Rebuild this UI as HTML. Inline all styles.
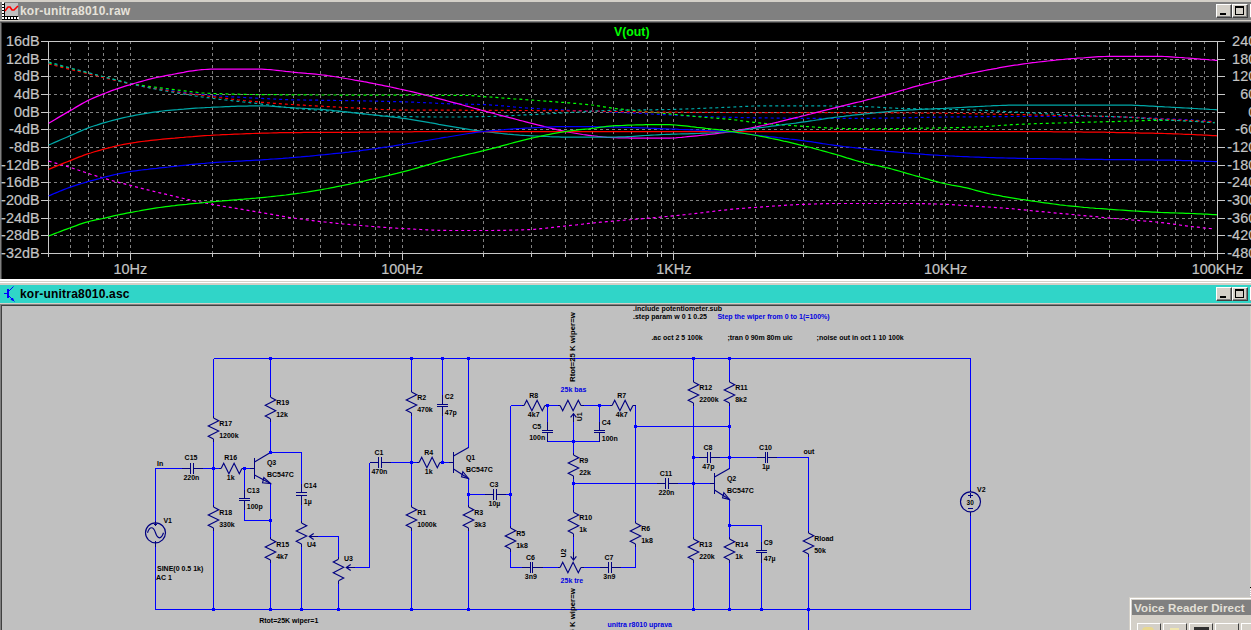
<!DOCTYPE html>
<html lang="en"><head><meta charset="utf-8"><title>kor-unitra8010</title>
<style>
html,body{margin:0;padding:0;}
body{width:1251px;height:630px;overflow:hidden;background:#d4d0c8;position:relative;font-family:"Liberation Sans", sans-serif;}
.abs{position:absolute;}
.tb{position:absolute;left:0;width:1251px;height:18px;}
.ttl{position:absolute;left:20px;top:0;height:18px;line-height:18px;font-size:12px;font-weight:bold;white-space:nowrap;letter-spacing:0.2px;}
.btn{position:absolute;width:16px;height:14px;box-sizing:border-box;background:#d4d0c8;border-top:1px solid #fff;border-left:1px solid #fff;border-right:1px solid #404040;border-bottom:1px solid #404040;box-shadow:inset -1px -1px 0 #808080;}
.btn i{position:absolute;display:block;background:#000;}
svg{position:absolute;left:0;top:0;}
svg text{font-family:"Liberation Sans", sans-serif;}
</style></head><body>
<div class="tb" style="top:2px;background:#808080;">
<div class="ttl" style="color:#e6e2da;">kor-unitra8010.raw</div>
<div class="btn" style="left:1216px;top:2px;"><i style="left:3px;top:8px;width:6px;height:2px;"></i></div>
<div class="btn" style="left:1232px;top:2px;"><i style="left:2px;top:1px;width:9px;height:9px;"></i><i style="left:3px;top:3px;width:7px;height:6px;background:#d4d0c8;"></i></div>
<div class="btn" style="left:1250px;top:2px;"></div>
</div>
<div class="abs" style="left:0;top:21px;width:1251px;height:1px;background:#808080;"></div>
<div class="abs" style="left:0;top:22px;width:1251px;height:257px;background:#000;border-top:1px solid #404040;border-left:1px solid #808080;box-sizing:border-box;"></div>
<div class="abs" style="left:1px;top:23px;width:1px;height:256px;background:#404040;"></div>
<div class="abs" style="left:0;top:279px;width:1251px;height:2px;background:#fff;"></div>
<div class="abs" style="left:0;top:282px;width:1251px;height:1px;background:#fff;"></div>
<div class="tb" style="top:285px;background:#30d5c8;">
<div class="ttl" style="color:#000;">kor-unitra8010.asc</div>
<div class="btn" style="left:1216px;top:2px;"><i style="left:3px;top:8px;width:6px;height:2px;"></i></div>
<div class="btn" style="left:1232px;top:2px;"><i style="left:2px;top:1px;width:9px;height:9px;"></i><i style="left:3px;top:3px;width:7px;height:6px;background:#d4d0c8;"></i></div>
<div class="btn" style="left:1250px;top:2px;"></div>
</div>
<div class="abs" style="left:0;top:304px;width:1251px;height:326px;background:#c0c0c0;border-top:1px solid #808080;border-left:1px solid #808080;box-sizing:border-box;"></div>
<div class="abs" style="left:1px;top:305px;width:1250px;height:1px;background:#404040;"></div>
<div class="abs" style="left:1px;top:305px;width:1px;height:325px;background:#404040;"></div>
<div class="abs" style="left:1250px;top:306px;width:1px;height:324px;background:#d4d0c8;"></div>
<div class="abs" style="left:1250px;top:587px;width:1px;height:1px;background:#000;"></div>
<div class="abs" style="left:1250px;top:589px;width:1px;height:8px;background:repeating-linear-gradient(#fff 0 1px,#c0c0c0 1px 2px);"></div>
<div class="abs" style="left:1129px;top:597px;width:130px;height:40px;background:#d4d0c8;border-top:1px solid #d4d0c8;border-left:1px solid #d4d0c8;box-shadow:inset 1px 1px 0 #fff;box-sizing:border-box;">
<div class="abs" style="left:2px;top:2px;width:130px;height:15px;background:#808080;"></div>
<div class="abs" style="left:4px;top:2px;height:16px;line-height:16px;font-size:11.5px;letter-spacing:0.15px;font-weight:bold;color:#e4e0d8;white-space:nowrap;" id="vrd">Voice Reader Direct</div>
<div class="abs" style="left:7px;top:25px;width:24px;height:22px;box-sizing:border-box;border-top:1px solid #fff;border-left:1px solid #fff;border-right:1px solid #404040;background:#d4d0c8;"></div>
<div class="abs" style="left:33px;top:25px;width:24px;height:22px;box-sizing:border-box;border-top:1px solid #fff;border-left:1px solid #fff;border-right:1px solid #404040;background:#d4d0c8;"></div>
<div class="abs" style="left:59px;top:25px;width:24px;height:22px;box-sizing:border-box;border-top:1px solid #fff;border-left:1px solid #fff;border-right:1px solid #404040;background:#d4d0c8;"></div>
<div class="abs" style="left:85px;top:25px;width:24px;height:22px;box-sizing:border-box;border-top:1px solid #fff;border-left:1px solid #fff;border-right:1px solid #404040;background:#d4d0c8;"></div>
<div class="abs" style="left:111px;top:25px;width:24px;height:22px;box-sizing:border-box;border-top:1px solid #fff;border-left:1px solid #fff;border-right:1px solid #404040;background:#d4d0c8;"></div>
<div class="abs" style="left:12px;top:29px;width:12px;height:4px;background:#e8d890;border-radius:4px 4px 0 0;"></div>
<div class="abs" style="left:40px;top:30px;width:9px;height:3px;background:#efe6b0;"></div>
<div class="abs" style="left:64px;top:29px;width:15px;height:4px;background:#303030;"></div>
</div>
<svg width="1251" height="630" viewBox="0 0 1251 630">
<g shape-rendering="crispEdges">
<rect x="2" y="3" width="3" height="17" fill="#000"/><rect x="2" y="16" width="16" height="4" fill="#000"/>
<rect x="5" y="3" width="13" height="13" fill="#c0c0c0"/>
<rect x="4" y="3" width="1" height="17" fill="#000"/><rect x="2" y="16" width="16" height="1" fill="#000"/>
<rect x="2" y="2" width="2" height="2" fill="#fff"/>
<rect x="2" y="5" width="2" height="2" fill="#fff"/>
<rect x="2" y="8" width="2" height="2" fill="#fff"/>
<rect x="2" y="11" width="2" height="2" fill="#fff"/>
<rect x="2" y="14" width="2" height="2" fill="#fff"/>
<rect x="2" y="17" width="2" height="2" fill="#fff"/>
<rect x="5" y="17" width="2" height="2" fill="#fff"/>
<rect x="8" y="17" width="2" height="2" fill="#fff"/>
<rect x="11" y="17" width="2" height="2" fill="#fff"/>
<rect x="14" y="17" width="2" height="2" fill="#fff"/>
<rect x="17" y="17" width="2" height="2" fill="#fff"/>
</g>
<path d="M5 11 L8 7 L10 7 L12 10 L14 10 L18 6" fill="none" stroke="#ff0000" stroke-width="1.6"/>
<g stroke="#0000ff" fill="none"><path d="M4 293.5 H8" stroke-width="1"/><path d="M8 289 V298" stroke-width="2"/><path d="M9 291 L13.5 286.5 M9 296 L14.5 301.5" stroke-width="1"/><path d="M11 299.5 L13.5 300.5 L12.5 298 Z" fill="#0000ff" stroke-width="1"/></g>
<g shape-rendering="crispEdges" stroke="#808080" stroke-width="1" stroke-dasharray="3 3" fill="none">
<path d="M48.0 59.5 H1216.5"/>
<path d="M48.0 76.5 H1216.5"/>
<path d="M48.0 94.5 H1216.5"/>
<path d="M48.0 112.5 H1216.5"/>
<path d="M48.0 129.5 H1216.5"/>
<path d="M48.0 147.5 H1216.5"/>
<path d="M48.0 165.5 H1216.5"/>
<path d="M48.0 182.5 H1216.5"/>
<path d="M48.0 200.5 H1216.5"/>
<path d="M48.0 218.5 H1216.5"/>
<path d="M48.0 235.5 H1216.5"/>
<path d="M70.5 41.0 V252.5"/>
<path d="M88.5 41.0 V252.5"/>
<path d="M103.5 41.0 V252.5"/>
<path d="M117.5 41.0 V252.5"/>
<path d="M130.5 41.0 V252.5"/>
<path d="M212.5 41.0 V252.5"/>
<path d="M259.5 41.0 V252.5"/>
<path d="M293.5 41.0 V252.5"/>
<path d="M320.5 41.0 V252.5"/>
<path d="M341.5 41.0 V252.5"/>
<path d="M359.5 41.0 V252.5"/>
<path d="M375.5 41.0 V252.5"/>
<path d="M389.5 41.0 V252.5"/>
<path d="M402.5 41.0 V252.5"/>
<path d="M483.5 41.0 V252.5"/>
<path d="M531.5 41.0 V252.5"/>
<path d="M565.5 41.0 V252.5"/>
<path d="M592.5 41.0 V252.5"/>
<path d="M613.5 41.0 V252.5"/>
<path d="M631.5 41.0 V252.5"/>
<path d="M647.5 41.0 V252.5"/>
<path d="M661.5 41.0 V252.5"/>
<path d="M673.5 41.0 V252.5"/>
<path d="M755.5 41.0 V252.5"/>
<path d="M803.5 41.0 V252.5"/>
<path d="M837.5 41.0 V252.5"/>
<path d="M863.5 41.0 V252.5"/>
<path d="M885.5 41.0 V252.5"/>
<path d="M903.5 41.0 V252.5"/>
<path d="M919.5 41.0 V252.5"/>
<path d="M933.5 41.0 V252.5"/>
<path d="M945.5 41.0 V252.5"/>
<path d="M1027.5 41.0 V252.5"/>
<path d="M1075.5 41.0 V252.5"/>
<path d="M1109.5 41.0 V252.5"/>
<path d="M1135.5 41.0 V252.5"/>
<path d="M1157.5 41.0 V252.5"/>
<path d="M1175.5 41.0 V252.5"/>
<path d="M1191.5 41.0 V252.5"/>
<path d="M1204.5 41.0 V252.5"/>
</g>
<g shape-rendering="crispEdges" stroke="#c8c8c8" stroke-width="1" fill="none">
<path d="M48.5 41.5 H1217.5 M48.5 253.5 H1217.5 M48.5 41.5 V253.5 M1217.5 41.5 V253.5"/>
<path d="M41 41.5 H48.5 M1217.5 41.5 H1225"/>
<path d="M41 59.5 H48.5 M1217.5 59.5 H1225"/>
<path d="M41 76.5 H48.5 M1217.5 76.5 H1225"/>
<path d="M41 94.5 H48.5 M1217.5 94.5 H1225"/>
<path d="M41 112.5 H48.5 M1217.5 112.5 H1225"/>
<path d="M41 129.5 H48.5 M1217.5 129.5 H1225"/>
<path d="M41 147.5 H48.5 M1217.5 147.5 H1225"/>
<path d="M41 165.5 H48.5 M1217.5 165.5 H1225"/>
<path d="M41 182.5 H48.5 M1217.5 182.5 H1225"/>
<path d="M41 200.5 H48.5 M1217.5 200.5 H1225"/>
<path d="M41 218.5 H48.5 M1217.5 218.5 H1225"/>
<path d="M41 235.5 H48.5 M1217.5 235.5 H1225"/>
<path d="M41 253.5 H48.5 M1217.5 253.5 H1225"/>
<path d="M70.5 253.5 V257.0"/>
<path d="M88.5 253.5 V257.0"/>
<path d="M103.5 253.5 V257.0"/>
<path d="M117.5 253.5 V257.0"/>
<path d="M130.5 253.5 V260.0"/>
<path d="M212.5 253.5 V257.0"/>
<path d="M259.5 253.5 V257.0"/>
<path d="M293.5 253.5 V257.0"/>
<path d="M320.5 253.5 V257.0"/>
<path d="M341.5 253.5 V257.0"/>
<path d="M359.5 253.5 V257.0"/>
<path d="M375.5 253.5 V257.0"/>
<path d="M389.5 253.5 V257.0"/>
<path d="M402.5 253.5 V260.0"/>
<path d="M483.5 253.5 V257.0"/>
<path d="M531.5 253.5 V257.0"/>
<path d="M565.5 253.5 V257.0"/>
<path d="M592.5 253.5 V257.0"/>
<path d="M613.5 253.5 V257.0"/>
<path d="M631.5 253.5 V257.0"/>
<path d="M647.5 253.5 V257.0"/>
<path d="M661.5 253.5 V257.0"/>
<path d="M673.5 253.5 V260.0"/>
<path d="M755.5 253.5 V257.0"/>
<path d="M803.5 253.5 V257.0"/>
<path d="M837.5 253.5 V257.0"/>
<path d="M863.5 253.5 V257.0"/>
<path d="M885.5 253.5 V257.0"/>
<path d="M903.5 253.5 V257.0"/>
<path d="M919.5 253.5 V257.0"/>
<path d="M933.5 253.5 V257.0"/>
<path d="M945.5 253.5 V260.0"/>
<path d="M1027.5 253.5 V257.0"/>
<path d="M1075.5 253.5 V257.0"/>
<path d="M1109.5 253.5 V257.0"/>
<path d="M1135.5 253.5 V257.0"/>
<path d="M1157.5 253.5 V257.0"/>
<path d="M1175.5 253.5 V257.0"/>
<path d="M1191.5 253.5 V257.0"/>
<path d="M1204.5 253.5 V257.0"/>
<path d="M48.5 253.5 V257 M1217.5 253.5 V260"/>
</g>
<path d="M48.7 63.2 L51.7 64.0 L54.7 64.8 L57.7 65.5 L60.7 66.3 L63.7 67.1 L66.7 67.9 L69.7 68.6 L72.7 69.4 L75.7 70.1 L78.7 70.9 L81.7 71.6 L84.7 72.4 L87.7 73.1 L90.7 73.9 L93.7 74.6 L96.7 75.4 L99.7 76.1 L102.7 76.9 L105.7 77.6 L108.7 78.4 L111.7 79.1 L114.7 79.9 L117.7 80.6 L120.7 81.4 L123.7 82.1 L126.7 82.8 L129.7 83.5 L132.7 84.1 L135.7 84.7 L138.7 85.3 L141.7 85.8 L144.7 86.4 L147.7 86.9 L150.7 87.4 L153.7 87.9 L156.7 88.4 L159.7 88.9 L162.7 89.3 L165.7 89.7 L168.7 90.2 L171.7 90.6 L174.7 91.0 L177.7 91.5 L180.7 91.9 L183.7 92.3 L186.7 92.7 L189.7 93.0 L192.7 93.4 L195.7 93.8 L198.7 94.1 L201.7 94.4 L204.7 94.7 L207.7 95.0 L210.7 95.3 L213.7 95.5 L216.7 95.8 L219.7 96.0 L222.7 96.2 L225.7 96.4 L228.7 96.6 L231.7 96.8 L234.7 97.0 L237.7 97.1 L240.7 97.3 L243.7 97.5 L246.7 97.6 L249.7 97.8 L252.7 98.0 L255.7 98.1 L258.7 98.3 L261.7 98.4 L264.7 98.6 L267.7 98.7 L270.7 98.9 L273.7 99.0 L276.7 99.2 L279.7 99.3 L282.7 99.4 L285.7 99.6 L288.7 99.7 L291.7 99.8 L294.7 99.8 L297.7 99.9 L300.7 100.0 L303.7 100.0 L306.7 100.1 L309.7 100.1 L312.7 100.2 L315.7 100.2 L318.7 100.2 L321.7 100.3 L324.7 100.3 L327.7 100.4 L330.7 100.4 L333.7 100.4 L336.7 100.5 L339.7 100.5 L342.7 100.5 L345.7 100.6 L348.7 100.6 L351.7 100.7 L354.7 100.7 L357.7 100.8 L360.7 100.9 L363.7 100.9 L366.7 101.0 L369.7 101.0 L372.7 101.1 L375.7 101.2 L378.7 101.2 L381.7 101.3 L384.7 101.3 L387.7 101.4 L390.7 101.5 L393.7 101.6 L396.7 101.6 L399.7 101.7 L402.7 101.8 L405.7 101.9 L408.7 102.0 L411.7 102.1 L414.7 102.2 L417.7 102.4 L420.7 102.5 L423.7 102.6 L426.7 102.8 L429.7 102.9 L432.7 103.0 L435.7 103.2 L438.7 103.3 L441.7 103.4 L444.7 103.6 L447.7 103.7 L450.7 103.8 L453.7 103.9 L456.7 103.9 L459.7 104.0 L462.7 104.1 L465.7 104.1 L468.7 104.2 L471.7 104.3 L474.7 104.3 L477.7 104.4 L480.7 104.5 L483.7 104.6 L486.7 104.7 L489.7 104.9 L492.7 105.1 L495.7 105.3 L498.7 105.5 L501.7 105.8 L504.7 106.0 L507.7 106.3 L510.7 106.6 L513.7 106.9 L516.7 107.1 L519.7 107.4 L522.7 107.6 L525.7 107.9 L528.7 108.1 L531.7 108.3 L534.7 108.5 L537.7 108.7 L540.7 108.8 L543.7 109.0 L546.7 109.2 L549.7 109.3 L552.7 109.5 L555.7 109.6 L558.7 109.8 L561.7 109.9 L564.7 110.1 L567.7 110.2 L570.7 110.3 L573.7 110.5 L576.7 110.6 L579.7 110.7 L582.7 110.8 L585.7 111.0 L588.7 111.1 L591.7 111.2 L594.7 111.3 L597.7 111.4 L600.7 111.5 L603.7 111.7 L606.7 111.8 L609.7 111.9 L612.7 112.1 L615.7 112.2 L618.7 112.3 L621.7 112.5 L624.7 112.6 L627.7 112.8 L630.7 112.9 L633.7 113.1 L636.7 113.2 L639.7 113.4 L642.7 113.5 L645.7 113.7 L648.7 113.8 L651.7 114.0 L654.7 114.1 L657.7 114.3 L660.7 114.4 L663.7 114.6 L666.7 114.7 L669.7 114.9 L672.7 115.1 L675.7 115.2 L678.7 115.4 L681.7 115.6 L684.7 115.7 L687.7 115.9 L690.7 116.1 L693.7 116.2 L696.7 116.3 L699.7 116.4 L702.7 116.5 L705.7 116.6 L708.7 116.7 L711.7 116.8 L714.7 116.9 L717.7 117.0 L720.7 117.1 L723.7 117.2 L726.7 117.2 L729.7 117.3 L732.7 117.4 L735.7 117.4 L738.7 117.5 L741.7 117.6 L744.7 117.6 L747.7 117.7 L750.7 117.7 L753.7 117.8 L756.7 117.8 L759.7 117.9 L762.7 117.9 L765.7 117.9 L768.7 118.0 L771.7 118.0 L774.7 118.1 L777.7 118.1 L780.7 118.2 L783.7 118.2 L786.7 118.2 L789.7 118.2 L792.7 118.3 L795.7 118.3 L798.7 118.3 L801.7 118.3 L804.7 118.3 L807.7 118.3 L810.7 118.3 L813.7 118.3 L816.7 118.3 L819.7 118.3 L822.7 118.3 L825.7 118.3 L828.7 118.3 L831.7 118.3 L834.7 118.3 L837.7 118.3 L840.7 118.3 L843.7 118.3 L846.7 118.3 L849.7 118.3 L852.7 118.3 L855.7 118.3 L858.7 118.3 L861.7 118.3 L864.7 118.3 L867.7 118.3 L870.7 118.3 L873.7 118.3 L876.7 118.2 L879.7 118.2 L882.7 118.2 L885.7 118.1 L888.7 118.1 L891.7 118.0 L894.7 118.0 L897.7 117.9 L900.7 117.8 L903.7 117.8 L906.7 117.7 L909.7 117.6 L912.7 117.6 L915.7 117.5 L918.7 117.4 L921.7 117.4 L924.7 117.3 L927.7 117.3 L930.7 117.2 L933.7 117.2 L936.7 117.1 L939.7 117.1 L942.7 117.0 L945.7 117.0 L948.7 117.0 L951.7 116.9 L954.7 116.9 L957.7 116.9 L960.7 116.9 L963.7 116.8 L966.7 116.8 L969.7 116.8 L972.7 116.8 L975.7 116.7 L978.7 116.7 L981.7 116.7 L984.7 116.7 L987.7 116.7 L990.7 116.6 L993.7 116.6 L996.7 116.6 L999.7 116.6 L1002.7 116.6 L1005.7 116.6 L1008.7 116.5 L1011.7 116.5 L1014.7 116.5 L1017.7 116.5 L1020.7 116.5 L1023.7 116.5 L1026.7 116.5 L1029.7 116.4 L1032.7 116.4 L1035.7 116.4 L1038.7 116.4 L1041.7 116.4 L1044.7 116.4 L1047.7 116.4 L1050.7 116.3 L1053.7 116.3 L1056.7 116.3 L1059.7 116.3 L1062.7 116.3 L1065.7 116.3 L1068.7 116.3 L1071.7 116.3 L1074.7 116.3 L1077.7 116.3 L1080.7 116.3 L1083.7 116.3 L1086.7 116.4 L1089.7 116.4 L1092.7 116.4 L1095.7 116.5 L1098.7 116.5 L1101.7 116.6 L1104.7 116.6 L1107.7 116.7 L1110.7 116.7 L1113.7 116.8 L1116.7 116.9 L1119.7 116.9 L1122.7 117.0 L1125.7 117.1 L1128.7 117.1 L1131.7 117.2 L1134.7 117.3 L1137.7 117.4 L1140.7 117.6 L1143.7 117.7 L1146.7 117.8 L1149.7 117.9 L1152.7 118.1 L1155.7 118.2 L1158.7 118.3 L1161.7 118.5 L1164.7 118.6 L1167.7 118.8 L1170.7 118.9 L1173.7 119.1 L1176.7 119.2 L1179.7 119.4 L1182.7 119.5 L1185.7 119.7 L1188.7 119.9 L1191.7 120.1 L1194.7 120.2 L1197.7 120.4 L1200.7 120.6 L1203.7 120.8 L1206.7 121.0 L1209.7 121.2 L1212.7 121.4 L1214.6 121.5" fill="none" stroke="#0000ff" stroke-width="1.2" stroke-dasharray="3 3"/>
<path d="M48.7 63.0 L51.7 63.8 L54.7 64.6 L57.7 65.3 L60.7 66.1 L63.7 66.9 L66.7 67.7 L69.7 68.4 L72.7 69.2 L75.7 69.9 L78.7 70.7 L81.7 71.4 L84.7 72.2 L87.7 72.9 L90.7 73.7 L93.7 74.4 L96.7 75.2 L99.7 75.9 L102.7 76.7 L105.7 77.4 L108.7 78.2 L111.7 78.9 L114.7 79.7 L117.7 80.5 L120.7 81.2 L123.7 82.0 L126.7 82.7 L129.7 83.3 L132.7 83.8 L135.7 84.4 L138.7 84.8 L141.7 85.3 L144.7 85.8 L147.7 86.2 L150.7 86.6 L153.7 87.0 L156.7 87.4 L159.7 87.8 L162.7 88.2 L165.7 88.5 L168.7 88.9 L171.7 89.3 L174.7 89.7 L177.7 90.1 L180.7 90.4 L183.7 90.8 L186.7 91.2 L189.7 91.5 L192.7 91.9 L195.7 92.2 L198.7 92.5 L201.7 92.8 L204.7 93.0 L207.7 93.2 L210.7 93.3 L213.7 93.5 L216.7 93.6 L219.7 93.7 L222.7 93.8 L225.7 93.9 L228.7 94.0 L231.7 94.1 L234.7 94.2 L237.7 94.2 L240.7 94.3 L243.7 94.4 L246.7 94.4 L249.7 94.5 L252.7 94.5 L255.7 94.6 L258.7 94.6 L261.7 94.6 L264.7 94.6 L267.7 94.7 L270.7 94.7 L273.7 94.7 L276.7 94.7 L279.7 94.8 L282.7 94.8 L285.7 94.8 L288.7 94.8 L291.7 94.8 L294.7 94.9 L297.7 94.9 L300.7 94.9 L303.7 94.9 L306.7 94.9 L309.7 94.9 L312.7 95.0 L315.7 95.0 L318.7 95.0 L321.7 95.0 L324.7 95.0 L327.7 95.0 L330.7 95.0 L333.7 95.0 L336.7 95.0 L339.7 95.1 L342.7 95.1 L345.7 95.1 L348.7 95.1 L351.7 95.1 L354.7 95.1 L357.7 95.1 L360.7 95.1 L363.7 95.1 L366.7 95.1 L369.7 95.2 L372.7 95.2 L375.7 95.2 L378.7 95.2 L381.7 95.2 L384.7 95.2 L387.7 95.2 L390.7 95.2 L393.7 95.2 L396.7 95.2 L399.7 95.2 L402.7 95.2 L405.7 95.2 L408.7 95.2 L411.7 95.2 L414.7 95.2 L417.7 95.2 L420.7 95.2 L423.7 95.2 L426.7 95.2 L429.7 95.3 L432.7 95.3 L435.7 95.3 L438.7 95.3 L441.7 95.3 L444.7 95.3 L447.7 95.3 L450.7 95.3 L453.7 95.3 L456.7 95.4 L459.7 95.4 L462.7 95.4 L465.7 95.4 L468.7 95.5 L471.7 95.7 L474.7 95.9 L477.7 96.1 L480.7 96.4 L483.7 96.6 L486.7 96.8 L489.7 97.0 L492.7 97.2 L495.7 97.4 L498.7 97.6 L501.7 97.9 L504.7 98.1 L507.7 98.3 L510.7 98.5 L513.7 98.8 L516.7 99.0 L519.7 99.2 L522.7 99.4 L525.7 99.7 L528.7 99.9 L531.7 100.1 L534.7 100.3 L537.7 100.5 L540.7 100.8 L543.7 101.0 L546.7 101.2 L549.7 101.4 L552.7 101.6 L555.7 101.8 L558.7 102.1 L561.7 102.3 L564.7 102.5 L567.7 102.8 L570.7 103.0 L573.7 103.3 L576.7 103.5 L579.7 103.8 L582.7 104.1 L585.7 104.4 L588.7 104.7 L591.7 105.0 L594.7 105.3 L597.7 105.8 L600.7 106.3 L603.7 106.8 L606.7 107.3 L609.7 107.7 L612.7 108.2 L615.7 108.5 L618.7 108.9 L621.7 109.2 L624.7 109.5 L627.7 109.9 L630.7 110.2 L633.7 110.5 L636.7 110.7 L639.7 111.0 L642.7 111.3 L645.7 111.6 L648.7 111.9 L651.7 112.1 L654.7 112.4 L657.7 112.7 L660.7 113.0 L663.7 113.3 L666.7 113.6 L669.7 113.9 L672.7 114.2 L675.7 114.5 L678.7 114.8 L681.7 115.1 L684.7 115.4 L687.7 115.7 L690.7 116.0 L693.7 116.3 L696.7 116.6 L699.7 116.8 L702.7 117.1 L705.7 117.4 L708.7 117.6 L711.7 117.9 L714.7 118.1 L717.7 118.3 L720.7 118.6 L723.7 118.8 L726.7 119.1 L729.7 119.3 L732.7 119.6 L735.7 120.0 L738.7 120.4 L741.7 120.8 L744.7 121.2 L747.7 121.6 L750.7 122.0 L753.7 122.3 L756.7 122.6 L759.7 122.9 L762.7 123.2 L765.7 123.5 L768.7 123.7 L771.7 124.0 L774.7 124.2 L777.7 124.5 L780.7 124.7 L783.7 124.9 L786.7 125.1 L789.7 125.4 L792.7 125.6 L795.7 125.8 L798.7 126.0 L801.7 126.2 L804.7 126.4 L807.7 126.6 L810.7 126.8 L813.7 127.0 L816.7 127.2 L819.7 127.4 L822.7 127.6 L825.7 127.8 L828.7 127.9 L831.7 128.1 L834.7 128.2 L837.7 128.3 L840.7 128.4 L843.7 128.5 L846.7 128.6 L849.7 128.6 L852.7 128.7 L855.7 128.7 L858.7 128.8 L861.7 128.8 L864.7 128.8 L867.7 128.8 L870.7 128.8 L873.7 128.8 L876.7 128.8 L879.7 128.7 L882.7 128.7 L885.7 128.7 L888.7 128.7 L891.7 128.6 L894.7 128.6 L897.7 128.6 L900.7 128.5 L903.7 128.5 L906.7 128.5 L909.7 128.4 L912.7 128.4 L915.7 128.3 L918.7 128.3 L921.7 128.2 L924.7 128.2 L927.7 128.1 L930.7 128.1 L933.7 128.0 L936.7 128.0 L939.7 127.9 L942.7 127.9 L945.7 127.8 L948.7 127.7 L951.7 127.7 L954.7 127.6 L957.7 127.6 L960.7 127.5 L963.7 127.4 L966.7 127.3 L969.7 127.2 L972.7 127.1 L975.7 127.0 L978.7 126.9 L981.7 126.8 L984.7 126.6 L987.7 126.4 L990.7 126.2 L993.7 126.0 L996.7 125.8 L999.7 125.5 L1002.7 125.3 L1005.7 125.1 L1008.7 124.9 L1011.7 124.7 L1014.7 124.6 L1017.7 124.4 L1020.7 124.3 L1023.7 124.2 L1026.7 124.1 L1029.7 123.9 L1032.7 123.8 L1035.7 123.7 L1038.7 123.6 L1041.7 123.5 L1044.7 123.4 L1047.7 123.3 L1050.7 123.2 L1053.7 123.1 L1056.7 123.0 L1059.7 123.0 L1062.7 122.9 L1065.7 122.8 L1068.7 122.7 L1071.7 122.6 L1074.7 122.5 L1077.7 122.4 L1080.7 122.4 L1083.7 122.3 L1086.7 122.2 L1089.7 122.1 L1092.7 122.1 L1095.7 122.0 L1098.7 121.9 L1101.7 121.8 L1104.7 121.8 L1107.7 121.7 L1110.7 121.6 L1113.7 121.6 L1116.7 121.5 L1119.7 121.4 L1122.7 121.3 L1125.7 121.2 L1128.7 121.1 L1131.7 121.0 L1134.7 120.9 L1137.7 120.8 L1140.7 120.7 L1143.7 120.6 L1146.7 120.5 L1149.7 120.4 L1152.7 120.3 L1155.7 120.3 L1158.7 120.3 L1161.7 120.3 L1164.7 120.3 L1167.7 120.4 L1170.7 120.4 L1173.7 120.4 L1176.7 120.5 L1179.7 120.5 L1182.7 120.6 L1185.7 120.7 L1188.7 120.7 L1191.7 120.8 L1194.7 120.9 L1197.7 121.1 L1200.7 121.3 L1203.7 121.5 L1206.7 121.8 L1209.7 122.0 L1212.7 122.3 L1214.6 122.5" fill="none" stroke="#00ff00" stroke-width="1.2" stroke-dasharray="3 3"/>
<path d="M48.7 64.0 L51.7 64.8 L54.7 65.5 L57.7 66.3 L60.7 67.1 L63.7 67.8 L66.7 68.6 L69.7 69.3 L72.7 70.0 L75.7 70.8 L78.7 71.5 L81.7 72.2 L84.7 73.0 L87.7 73.7 L90.7 74.4 L93.7 75.2 L96.7 75.9 L99.7 76.6 L102.7 77.4 L105.7 78.1 L108.7 78.8 L111.7 79.5 L114.7 80.3 L117.7 81.0 L120.7 81.7 L123.7 82.4 L126.7 83.1 L129.7 83.8 L132.7 84.4 L135.7 85.0 L138.7 85.6 L141.7 86.2 L144.7 86.8 L147.7 87.3 L150.7 87.8 L153.7 88.4 L156.7 88.9 L159.7 89.4 L162.7 89.9 L165.7 90.4 L168.7 90.8 L171.7 91.3 L174.7 91.7 L177.7 92.1 L180.7 92.6 L183.7 93.0 L186.7 93.4 L189.7 93.8 L192.7 94.2 L195.7 94.5 L198.7 94.9 L201.7 95.3 L204.7 95.7 L207.7 96.1 L210.7 96.4 L213.7 96.8 L216.7 97.2 L219.7 97.6 L222.7 97.9 L225.7 98.3 L228.7 98.7 L231.7 99.1 L234.7 99.4 L237.7 99.8 L240.7 100.1 L243.7 100.5 L246.7 100.8 L249.7 101.1 L252.7 101.5 L255.7 101.7 L258.7 102.0 L261.7 102.3 L264.7 102.5 L267.7 102.8 L270.7 103.0 L273.7 103.3 L276.7 103.5 L279.7 103.7 L282.7 103.9 L285.7 104.1 L288.7 104.3 L291.7 104.5 L294.7 104.7 L297.7 104.9 L300.7 105.1 L303.7 105.2 L306.7 105.4 L309.7 105.6 L312.7 105.8 L315.7 105.9 L318.7 106.1 L321.7 106.2 L324.7 106.4 L327.7 106.6 L330.7 106.7 L333.7 106.9 L336.7 107.0 L339.7 107.2 L342.7 107.3 L345.7 107.5 L348.7 107.6 L351.7 107.8 L354.7 107.9 L357.7 108.1 L360.7 108.3 L363.7 108.4 L366.7 108.6 L369.7 108.8 L372.7 109.0 L375.7 109.1 L378.7 109.3 L381.7 109.5 L384.7 109.6 L387.7 109.7 L390.7 109.8 L393.7 109.9 L396.7 110.0 L399.7 110.1 L402.7 110.1 L405.7 110.1 L408.7 110.1 L411.7 110.1 L414.7 110.2 L417.7 110.2 L420.7 110.2 L423.7 110.2 L426.7 110.2 L429.7 110.2 L432.7 110.2 L435.7 110.2 L438.7 110.2 L441.7 110.2 L444.7 110.2 L447.7 110.2 L450.7 110.2 L453.7 110.2 L456.7 110.2 L459.7 110.2 L462.7 110.2 L465.7 110.3 L468.7 110.3 L471.7 110.3 L474.7 110.3 L477.7 110.3 L480.7 110.3 L483.7 110.3 L486.7 110.3 L489.7 110.3 L492.7 110.3 L495.7 110.3 L498.7 110.4 L501.7 110.4 L504.7 110.4 L507.7 110.4 L510.7 110.4 L513.7 110.4 L516.7 110.5 L519.7 110.5 L522.7 110.5 L525.7 110.5 L528.7 110.5 L531.7 110.5 L534.7 110.6 L537.7 110.6 L540.7 110.6 L543.7 110.6 L546.7 110.7 L549.7 110.7 L552.7 110.7 L555.7 110.7 L558.7 110.7 L561.7 110.8 L564.7 110.8 L567.7 110.8 L570.7 110.8 L573.7 110.9 L576.7 110.9 L579.7 110.9 L582.7 111.0 L585.7 111.0 L588.7 111.1 L591.7 111.1 L594.7 111.1 L597.7 111.2 L600.7 111.2 L603.7 111.3 L606.7 111.3 L609.7 111.4 L612.7 111.4 L615.7 111.5 L618.7 111.5 L621.7 111.6 L624.7 111.6 L627.7 111.7 L630.7 111.7 L633.7 111.7 L636.7 111.8 L639.7 111.8 L642.7 111.9 L645.7 111.9 L648.7 111.9 L651.7 112.0 L654.7 112.0 L657.7 112.0 L660.7 112.1 L663.7 112.1 L666.7 112.1 L669.7 112.1 L672.7 112.2 L675.7 112.2 L678.7 112.2 L681.7 112.2 L684.7 112.3 L687.7 112.3 L690.7 112.3 L693.7 112.3 L696.7 112.3 L699.7 112.3 L702.7 112.4 L705.7 112.4 L708.7 112.4 L711.7 112.4 L714.7 112.4 L717.7 112.4 L720.7 112.5 L723.7 112.5 L726.7 112.5 L729.7 112.5 L732.7 112.5 L735.7 112.5 L738.7 112.5 L741.7 112.6 L744.7 112.6 L747.7 112.6 L750.7 112.6 L753.7 112.6 L756.7 112.6 L759.7 112.6 L762.7 112.6 L765.7 112.6 L768.7 112.6 L771.7 112.6 L774.7 112.6 L777.7 112.7 L780.7 112.7 L783.7 112.7 L786.7 112.7 L789.7 112.7 L792.7 112.7 L795.7 112.7 L798.7 112.7 L801.7 112.7 L804.7 112.7 L807.7 112.7 L810.7 112.7 L813.7 112.7 L816.7 112.7 L819.7 112.7 L822.7 112.7 L825.7 112.7 L828.7 112.7 L831.7 112.7 L834.7 112.7 L837.7 112.7 L840.7 112.7 L843.7 112.8 L846.7 112.8 L849.7 112.8 L852.7 112.8 L855.7 112.8 L858.7 112.8 L861.7 112.8 L864.7 112.8 L867.7 112.8 L870.7 112.8 L873.7 112.8 L876.7 112.8 L879.7 112.9 L882.7 112.9 L885.7 112.9 L888.7 112.9 L891.7 112.9 L894.7 112.9 L897.7 112.9 L900.7 113.0 L903.7 113.0 L906.7 113.0 L909.7 113.0 L912.7 113.0 L915.7 113.1 L918.7 113.1 L921.7 113.1 L924.7 113.1 L927.7 113.1 L930.7 113.2 L933.7 113.2 L936.7 113.2 L939.7 113.2 L942.7 113.3 L945.7 113.3 L948.7 113.3 L951.7 113.4 L954.7 113.4 L957.7 113.4 L960.7 113.5 L963.7 113.5 L966.7 113.6 L969.7 113.6 L972.7 113.7 L975.7 113.8 L978.7 113.8 L981.7 113.9 L984.7 113.9 L987.7 114.0 L990.7 114.1 L993.7 114.1 L996.7 114.2 L999.7 114.3 L1002.7 114.3 L1005.7 114.4 L1008.7 114.4 L1011.7 114.5 L1014.7 114.6 L1017.7 114.6 L1020.7 114.7 L1023.7 114.7 L1026.7 114.8 L1029.7 114.9 L1032.7 114.9 L1035.7 115.0 L1038.7 115.0 L1041.7 115.1 L1044.7 115.2 L1047.7 115.2 L1050.7 115.3 L1053.7 115.3 L1056.7 115.4 L1059.7 115.5 L1062.7 115.5 L1065.7 115.6 L1068.7 115.7 L1071.7 115.7 L1074.7 115.8 L1077.7 115.9 L1080.7 115.9 L1083.7 116.0 L1086.7 116.0 L1089.7 116.1 L1092.7 116.2 L1095.7 116.2 L1098.7 116.3 L1101.7 116.4 L1104.7 116.5 L1107.7 116.5 L1110.7 116.6 L1113.7 116.7 L1116.7 116.8 L1119.7 116.9 L1122.7 117.0 L1125.7 117.1 L1128.7 117.2 L1131.7 117.3 L1134.7 117.5 L1137.7 117.7 L1140.7 117.8 L1143.7 118.0 L1146.7 118.2 L1149.7 118.3 L1152.7 118.5 L1155.7 118.7 L1158.7 118.9 L1161.7 119.0 L1164.7 119.2 L1167.7 119.3 L1170.7 119.5 L1173.7 119.7 L1176.7 119.8 L1179.7 120.0 L1182.7 120.2 L1185.7 120.3 L1188.7 120.5 L1191.7 120.7 L1194.7 120.9 L1197.7 121.0 L1200.7 121.2 L1203.7 121.4 L1206.7 121.5 L1209.7 121.7 L1212.7 121.9 L1214.6 122.0" fill="none" stroke="#ff0000" stroke-width="1.2" stroke-dasharray="3 3"/>
<path d="M48.7 62.0 L51.7 62.8 L54.7 63.7 L57.7 64.5 L60.7 65.3 L63.7 66.1 L66.7 66.9 L69.7 67.7 L72.7 68.6 L75.7 69.4 L78.7 70.2 L81.7 70.9 L84.7 71.7 L87.7 72.5 L90.7 73.3 L93.7 74.1 L96.7 74.9 L99.7 75.7 L102.7 76.5 L105.7 77.3 L108.7 78.1 L111.7 78.9 L114.7 79.7 L117.7 80.5 L120.7 81.3 L123.7 82.1 L126.7 82.8 L129.7 83.6 L132.7 84.3 L135.7 84.9 L138.7 85.6 L141.7 86.2 L144.7 86.9 L147.7 87.5 L150.7 88.1 L153.7 88.7 L156.7 89.3 L159.7 89.9 L162.7 90.4 L165.7 91.0 L168.7 91.5 L171.7 92.0 L174.7 92.6 L177.7 93.1 L180.7 93.6 L183.7 94.1 L186.7 94.6 L189.7 95.0 L192.7 95.5 L195.7 96.0 L198.7 96.4 L201.7 96.9 L204.7 97.3 L207.7 97.7 L210.7 98.1 L213.7 98.5 L216.7 98.9 L219.7 99.3 L222.7 99.6 L225.7 100.0 L228.7 100.3 L231.7 100.7 L234.7 101.0 L237.7 101.3 L240.7 101.6 L243.7 102.0 L246.7 102.3 L249.7 102.6 L252.7 103.0 L255.7 103.3 L258.7 103.7 L261.7 104.1 L264.7 104.5 L267.7 104.9 L270.7 105.3 L273.7 105.8 L276.7 106.2 L279.7 106.6 L282.7 107.0 L285.7 107.4 L288.7 107.8 L291.7 108.1 L294.7 108.4 L297.7 108.7 L300.7 108.9 L303.7 109.2 L306.7 109.4 L309.7 109.6 L312.7 109.8 L315.7 110.0 L318.7 110.2 L321.7 110.4 L324.7 110.6 L327.7 110.8 L330.7 111.0 L333.7 111.2 L336.7 111.4 L339.7 111.6 L342.7 111.8 L345.7 112.0 L348.7 112.2 L351.7 112.5 L354.7 112.8 L357.7 113.1 L360.7 113.4 L363.7 113.8 L366.7 114.2 L369.7 114.6 L372.7 114.9 L375.7 115.3 L378.7 115.6 L381.7 115.9 L384.7 116.1 L387.7 116.2 L390.7 116.3 L393.7 116.4 L396.7 116.4 L399.7 116.5 L402.7 116.6 L405.7 116.6 L408.7 116.7 L411.7 116.7 L414.7 116.7 L417.7 116.8 L420.7 116.8 L423.7 116.9 L426.7 116.9 L429.7 116.9 L432.7 116.9 L435.7 117.0 L438.7 117.0 L441.7 117.0 L444.7 117.0 L447.7 117.0 L450.7 117.0 L453.7 117.0 L456.7 117.0 L459.7 117.0 L462.7 116.9 L465.7 116.9 L468.7 116.9 L471.7 116.8 L474.7 116.8 L477.7 116.7 L480.7 116.7 L483.7 116.6 L486.7 116.5 L489.7 116.5 L492.7 116.4 L495.7 116.3 L498.7 116.2 L501.7 116.0 L504.7 115.9 L507.7 115.8 L510.7 115.6 L513.7 115.5 L516.7 115.3 L519.7 115.2 L522.7 115.0 L525.7 114.9 L528.7 114.7 L531.7 114.6 L534.7 114.5 L537.7 114.3 L540.7 114.1 L543.7 114.0 L546.7 113.8 L549.7 113.7 L552.7 113.5 L555.7 113.3 L558.7 113.2 L561.7 113.0 L564.7 112.8 L567.7 112.7 L570.7 112.5 L573.7 112.3 L576.7 112.2 L579.7 112.0 L582.7 111.8 L585.7 111.6 L588.7 111.4 L591.7 111.2 L594.7 111.1 L597.7 110.9 L600.7 110.8 L603.7 110.6 L606.7 110.5 L609.7 110.4 L612.7 110.3 L615.7 110.3 L618.7 110.2 L621.7 110.2 L624.7 110.1 L627.7 110.1 L630.7 110.0 L633.7 110.0 L636.7 110.0 L639.7 109.9 L642.7 109.9 L645.7 109.9 L648.7 109.8 L651.7 109.8 L654.7 109.8 L657.7 109.7 L660.7 109.7 L663.7 109.6 L666.7 109.5 L669.7 109.5 L672.7 109.4 L675.7 109.3 L678.7 109.2 L681.7 109.1 L684.7 109.0 L687.7 108.9 L690.7 108.8 L693.7 108.7 L696.7 108.5 L699.7 108.4 L702.7 108.3 L705.7 108.2 L708.7 108.0 L711.7 107.9 L714.7 107.8 L717.7 107.7 L720.7 107.5 L723.7 107.4 L726.7 107.3 L729.7 107.2 L732.7 107.0 L735.7 106.9 L738.7 106.8 L741.7 106.6 L744.7 106.4 L747.7 106.3 L750.7 106.1 L753.7 106.0 L756.7 105.9 L759.7 105.8 L762.7 105.8 L765.7 105.8 L768.7 105.8 L771.7 105.8 L774.7 105.8 L777.7 105.8 L780.7 105.8 L783.7 105.8 L786.7 105.8 L789.7 105.8 L792.7 105.8 L795.7 105.8 L798.7 105.8 L801.7 105.8 L804.7 105.8 L807.7 105.8 L810.7 105.8 L813.7 105.8 L816.7 105.9 L819.7 105.9 L822.7 105.9 L825.7 105.9 L828.7 106.0 L831.7 106.0 L834.7 106.1 L837.7 106.1 L840.7 106.2 L843.7 106.2 L846.7 106.3 L849.7 106.3 L852.7 106.4 L855.7 106.4 L858.7 106.5 L861.7 106.6 L864.7 106.6 L867.7 106.7 L870.7 106.8 L873.7 107.0 L876.7 107.1 L879.7 107.3 L882.7 107.5 L885.7 107.7 L888.7 107.8 L891.7 108.0 L894.7 108.2 L897.7 108.3 L900.7 108.4 L903.7 108.5 L906.7 108.6 L909.7 108.7 L912.7 108.7 L915.7 108.8 L918.7 108.8 L921.7 108.9 L924.7 108.9 L927.7 109.0 L930.7 109.0 L933.7 109.1 L936.7 109.1 L939.7 109.2 L942.7 109.2 L945.7 109.3 L948.7 109.4 L951.7 109.4 L954.7 109.5 L957.7 109.6 L960.7 109.6 L963.7 109.7 L966.7 109.8 L969.7 109.9 L972.7 110.0 L975.7 110.1 L978.7 110.2 L981.7 110.3 L984.7 110.4 L987.7 110.6 L990.7 110.7 L993.7 110.9 L996.7 111.0 L999.7 111.2 L1002.7 111.4 L1005.7 111.5 L1008.7 111.7 L1011.7 111.9 L1014.7 112.0 L1017.7 112.2 L1020.7 112.3 L1023.7 112.5 L1026.7 112.7 L1029.7 112.8 L1032.7 113.0 L1035.7 113.2 L1038.7 113.4 L1041.7 113.5 L1044.7 113.7 L1047.7 113.9 L1050.7 114.0 L1053.7 114.2 L1056.7 114.4 L1059.7 114.5 L1062.7 114.7 L1065.7 114.9 L1068.7 115.0 L1071.7 115.1 L1074.7 115.3 L1077.7 115.4 L1080.7 115.5 L1083.7 115.6 L1086.7 115.7 L1089.7 115.8 L1092.7 115.9 L1095.7 116.0 L1098.7 116.1 L1101.7 116.2 L1104.7 116.3 L1107.7 116.4 L1110.7 116.5 L1113.7 116.6 L1116.7 116.7 L1119.7 116.8 L1122.7 117.0 L1125.7 117.1 L1128.7 117.3 L1131.7 117.5 L1134.7 117.7 L1137.7 118.0 L1140.7 118.2 L1143.7 118.4 L1146.7 118.7 L1149.7 118.9 L1152.7 119.2 L1155.7 119.4 L1158.7 119.6 L1161.7 119.7 L1164.7 119.9 L1167.7 120.1 L1170.7 120.2 L1173.7 120.4 L1176.7 120.5 L1179.7 120.7 L1182.7 120.8 L1185.7 121.0 L1188.7 121.1 L1191.7 121.3 L1194.7 121.5 L1197.7 121.7 L1200.7 121.9 L1203.7 122.1 L1206.7 122.3 L1209.7 122.5 L1212.7 122.7 L1214.6 122.8" fill="none" stroke="#00a8a8" stroke-width="1.2" stroke-dasharray="3 3"/>
<path d="M48.7 161.2 L51.7 162.0 L54.7 162.9 L57.7 163.8 L60.7 164.6 L63.7 165.5 L66.7 166.4 L69.7 167.3 L72.7 168.2 L75.7 169.2 L78.7 170.2 L81.7 171.2 L84.7 172.2 L87.7 173.2 L90.7 174.2 L93.7 175.1 L96.7 176.1 L99.7 177.0 L102.7 177.9 L105.7 178.8 L108.7 179.6 L111.7 180.5 L114.7 181.3 L117.7 182.1 L120.7 182.9 L123.7 183.7 L126.7 184.5 L129.7 185.2 L132.7 186.0 L135.7 186.8 L138.7 187.6 L141.7 188.3 L144.7 189.1 L147.7 189.8 L150.7 190.6 L153.7 191.3 L156.7 192.1 L159.7 192.8 L162.7 193.5 L165.7 194.2 L168.7 195.0 L171.7 195.7 L174.7 196.4 L177.7 197.1 L180.7 197.8 L183.7 198.5 L186.7 199.2 L189.7 199.8 L192.7 200.5 L195.7 201.1 L198.7 201.7 L201.7 202.3 L204.7 202.9 L207.7 203.5 L210.7 204.1 L213.7 204.6 L216.7 205.2 L219.7 205.7 L222.7 206.2 L225.7 206.7 L228.7 207.2 L231.7 207.7 L234.7 208.2 L237.7 208.7 L240.7 209.2 L243.7 209.7 L246.7 210.2 L249.7 210.7 L252.7 211.2 L255.7 211.7 L258.7 212.2 L261.7 212.7 L264.7 213.2 L267.7 213.7 L270.7 214.2 L273.7 214.8 L276.7 215.3 L279.7 215.8 L282.7 216.3 L285.7 216.8 L288.7 217.3 L291.7 217.7 L294.7 218.2 L297.7 218.6 L300.7 219.0 L303.7 219.4 L306.7 219.8 L309.7 220.2 L312.7 220.6 L315.7 221.0 L318.7 221.3 L321.7 221.7 L324.7 222.0 L327.7 222.3 L330.7 222.6 L333.7 223.0 L336.7 223.3 L339.7 223.6 L342.7 223.9 L345.7 224.1 L348.7 224.4 L351.7 224.7 L354.7 224.9 L357.7 225.2 L360.7 225.5 L363.7 225.7 L366.7 226.0 L369.7 226.2 L372.7 226.5 L375.7 226.7 L378.7 226.9 L381.7 227.2 L384.7 227.4 L387.7 227.6 L390.7 227.8 L393.7 228.0 L396.7 228.2 L399.7 228.3 L402.7 228.5 L405.7 228.7 L408.7 228.8 L411.7 229.0 L414.7 229.2 L417.7 229.3 L420.7 229.5 L423.7 229.7 L426.7 229.8 L429.7 229.9 L432.7 230.1 L435.7 230.2 L438.7 230.3 L441.7 230.4 L444.7 230.4 L447.7 230.5 L450.7 230.5 L453.7 230.5 L456.7 230.5 L459.7 230.5 L462.7 230.5 L465.7 230.5 L468.7 230.5 L471.7 230.5 L474.7 230.5 L477.7 230.5 L480.7 230.5 L483.7 230.5 L486.7 230.5 L489.7 230.5 L492.7 230.5 L495.7 230.4 L498.7 230.4 L501.7 230.3 L504.7 230.3 L507.7 230.2 L510.7 230.1 L513.7 230.1 L516.7 230.0 L519.7 229.9 L522.7 229.8 L525.7 229.7 L528.7 229.6 L531.7 229.5 L534.7 229.3 L537.7 229.0 L540.7 228.7 L543.7 228.4 L546.7 228.1 L549.7 227.8 L552.7 227.4 L555.7 227.1 L558.7 226.7 L561.7 226.4 L564.7 226.1 L567.7 225.8 L570.7 225.4 L573.7 225.1 L576.7 224.8 L579.7 224.4 L582.7 224.1 L585.7 223.7 L588.7 223.4 L591.7 223.1 L594.7 222.8 L597.7 222.5 L600.7 222.2 L603.7 221.9 L606.7 221.6 L609.7 221.4 L612.7 221.1 L615.7 220.8 L618.7 220.6 L621.7 220.3 L624.7 220.1 L627.7 219.8 L630.7 219.6 L633.7 219.3 L636.7 219.1 L639.7 218.9 L642.7 218.6 L645.7 218.4 L648.7 218.1 L651.7 217.9 L654.7 217.6 L657.7 217.4 L660.7 217.1 L663.7 216.8 L666.7 216.5 L669.7 216.2 L672.7 215.9 L675.7 215.6 L678.7 215.3 L681.7 215.0 L684.7 214.7 L687.7 214.3 L690.7 214.0 L693.7 213.7 L696.7 213.3 L699.7 213.0 L702.7 212.7 L705.7 212.3 L708.7 211.9 L711.7 211.6 L714.7 211.2 L717.7 210.8 L720.7 210.4 L723.7 210.1 L726.7 209.8 L729.7 209.5 L732.7 209.2 L735.7 208.9 L738.7 208.6 L741.7 208.4 L744.7 208.2 L747.7 207.9 L750.7 207.7 L753.7 207.5 L756.7 207.3 L759.7 207.1 L762.7 206.9 L765.7 206.7 L768.7 206.5 L771.7 206.2 L774.7 206.0 L777.7 205.8 L780.7 205.6 L783.7 205.4 L786.7 205.2 L789.7 205.0 L792.7 204.8 L795.7 204.6 L798.7 204.5 L801.7 204.4 L804.7 204.3 L807.7 204.2 L810.7 204.1 L813.7 204.0 L816.7 203.9 L819.7 203.8 L822.7 203.7 L825.7 203.6 L828.7 203.6 L831.7 203.5 L834.7 203.5 L837.7 203.5 L840.7 203.5 L843.7 203.5 L846.7 203.5 L849.7 203.5 L852.7 203.5 L855.7 203.5 L858.7 203.5 L861.7 203.5 L864.7 203.5 L867.7 203.5 L870.7 203.5 L873.7 203.5 L876.7 203.5 L879.7 203.5 L882.7 203.5 L885.7 203.5 L888.7 203.5 L891.7 203.5 L894.7 203.5 L897.7 203.5 L900.7 203.5 L903.7 203.5 L906.7 203.5 L909.7 203.5 L912.7 203.5 L915.7 203.6 L918.7 203.6 L921.7 203.7 L924.7 203.7 L927.7 203.8 L930.7 203.9 L933.7 203.9 L936.7 204.0 L939.7 204.1 L942.7 204.2 L945.7 204.3 L948.7 204.4 L951.7 204.6 L954.7 204.8 L957.7 205.0 L960.7 205.3 L963.7 205.5 L966.7 205.7 L969.7 205.9 L972.7 206.1 L975.7 206.3 L978.7 206.4 L981.7 206.6 L984.7 206.8 L987.7 207.0 L990.7 207.2 L993.7 207.4 L996.7 207.6 L999.7 207.8 L1002.7 208.0 L1005.7 208.3 L1008.7 208.5 L1011.7 208.7 L1014.7 209.0 L1017.7 209.3 L1020.7 209.6 L1023.7 209.9 L1026.7 210.2 L1029.7 210.5 L1032.7 210.8 L1035.7 211.1 L1038.7 211.4 L1041.7 211.6 L1044.7 211.9 L1047.7 212.2 L1050.7 212.5 L1053.7 212.8 L1056.7 213.1 L1059.7 213.3 L1062.7 213.6 L1065.7 213.9 L1068.7 214.2 L1071.7 214.5 L1074.7 214.7 L1077.7 215.0 L1080.7 215.3 L1083.7 215.6 L1086.7 215.9 L1089.7 216.1 L1092.7 216.4 L1095.7 216.7 L1098.7 217.0 L1101.7 217.3 L1104.7 217.6 L1107.7 217.8 L1110.7 218.1 L1113.7 218.4 L1116.7 218.6 L1119.7 218.9 L1122.7 219.1 L1125.7 219.4 L1128.7 219.6 L1131.7 219.9 L1134.7 220.1 L1137.7 220.3 L1140.7 220.6 L1143.7 220.9 L1146.7 221.1 L1149.7 221.4 L1152.7 221.7 L1155.7 222.0 L1158.7 222.3 L1161.7 222.6 L1164.7 223.0 L1167.7 223.4 L1170.7 223.8 L1173.7 224.2 L1176.7 224.6 L1179.7 225.0 L1182.7 225.4 L1185.7 225.8 L1188.7 226.2 L1191.7 226.5 L1194.7 226.9 L1197.7 227.2 L1200.7 227.5 L1203.7 227.9 L1206.7 228.2 L1209.7 228.5 L1212.7 228.8 L1214.6 229.0" fill="none" stroke="#ff00ff" stroke-width="1.2" stroke-dasharray="3 3"/>
<path d="M48.7 123.3 L51.7 121.5 L54.7 119.7 L57.7 117.9 L60.7 116.1 L63.7 114.4 L66.7 112.6 L69.7 110.9 L72.7 109.2 L75.7 107.4 L78.7 105.6 L81.7 103.9 L84.7 102.2 L87.7 100.6 L90.7 99.2 L93.7 97.9 L96.7 96.6 L99.7 95.4 L102.7 94.1 L105.7 93.0 L108.7 91.8 L111.7 90.7 L114.7 89.7 L117.7 88.6 L120.7 87.6 L123.7 86.6 L126.7 85.7 L129.7 84.8 L132.7 83.9 L135.7 83.0 L138.7 82.1 L141.7 81.3 L144.7 80.5 L147.7 79.7 L150.7 78.9 L153.7 78.2 L156.7 77.5 L159.7 76.9 L162.7 76.3 L165.7 75.7 L168.7 75.1 L171.7 74.6 L174.7 74.0 L177.7 73.4 L180.7 72.8 L183.7 72.3 L186.7 71.7 L189.7 71.2 L192.7 70.8 L195.7 70.4 L198.7 70.0 L201.7 69.7 L204.7 69.5 L207.7 69.3 L210.7 69.2 L213.7 69.2 L216.7 69.2 L219.7 69.2 L222.7 69.2 L225.7 69.2 L228.7 69.2 L231.7 69.2 L234.7 69.2 L237.7 69.2 L240.7 69.2 L243.7 69.2 L246.7 69.2 L249.7 69.2 L252.7 69.2 L255.7 69.2 L258.7 69.2 L261.7 69.2 L264.7 69.3 L267.7 69.5 L270.7 69.7 L273.7 70.0 L276.7 70.3 L279.7 70.7 L282.7 71.0 L285.7 71.4 L288.7 71.7 L291.7 72.0 L294.7 72.3 L297.7 72.6 L300.7 72.8 L303.7 73.1 L306.7 73.4 L309.7 73.6 L312.7 73.9 L315.7 74.2 L318.7 74.5 L321.7 74.9 L324.7 75.2 L327.7 75.7 L330.7 76.1 L333.7 76.5 L336.7 77.0 L339.7 77.5 L342.7 78.0 L345.7 78.5 L348.7 79.0 L351.7 79.5 L354.7 80.1 L357.7 80.6 L360.7 81.1 L363.7 81.7 L366.7 82.2 L369.7 82.8 L372.7 83.4 L375.7 84.0 L378.7 84.6 L381.7 85.2 L384.7 85.8 L387.7 86.4 L390.7 87.0 L393.7 87.7 L396.7 88.3 L399.7 89.0 L402.7 89.6 L405.7 90.3 L408.7 91.0 L411.7 91.7 L414.7 92.4 L417.7 93.2 L420.7 93.9 L423.7 94.7 L426.7 95.5 L429.7 96.2 L432.7 97.0 L435.7 97.8 L438.7 98.6 L441.7 99.4 L444.7 100.2 L447.7 101.0 L450.7 101.8 L453.7 102.6 L456.7 103.4 L459.7 104.2 L462.7 105.0 L465.7 105.9 L468.7 106.7 L471.7 107.5 L474.7 108.4 L477.7 109.2 L480.7 110.0 L483.7 110.8 L486.7 111.6 L489.7 112.4 L492.7 113.2 L495.7 114.0 L498.7 114.8 L501.7 115.6 L504.7 116.4 L507.7 117.2 L510.7 117.9 L513.7 118.7 L516.7 119.5 L519.7 120.3 L522.7 121.0 L525.7 121.8 L528.7 122.6 L531.7 123.3 L534.7 124.1 L537.7 124.9 L540.7 125.6 L543.7 126.4 L546.7 127.2 L549.7 127.9 L552.7 128.7 L555.7 129.4 L558.7 130.1 L561.7 130.7 L564.7 131.3 L567.7 131.9 L570.7 132.5 L573.7 133.0 L576.7 133.5 L579.7 134.0 L582.7 134.5 L585.7 134.9 L588.7 135.3 L591.7 135.7 L594.7 136.0 L597.7 136.4 L600.7 136.7 L603.7 137.0 L606.7 137.3 L609.7 137.5 L612.7 137.7 L615.7 137.7 L618.7 137.8 L621.7 137.8 L624.7 137.9 L627.7 137.9 L630.7 138.0 L633.7 138.0 L636.7 138.1 L639.7 138.1 L642.7 138.1 L645.7 138.1 L648.7 138.2 L651.7 138.2 L654.7 138.2 L657.7 138.2 L660.7 138.2 L663.7 138.2 L666.7 138.2 L669.7 138.1 L672.7 138.0 L675.7 137.8 L678.7 137.5 L681.7 137.3 L684.7 137.0 L687.7 136.7 L690.7 136.4 L693.7 136.1 L696.7 135.8 L699.7 135.5 L702.7 135.2 L705.7 134.9 L708.7 134.5 L711.7 134.2 L714.7 133.8 L717.7 133.4 L720.7 133.0 L723.7 132.6 L726.7 132.2 L729.7 131.7 L732.7 131.3 L735.7 130.8 L738.7 130.3 L741.7 129.7 L744.7 129.2 L747.7 128.6 L750.7 128.0 L753.7 127.4 L756.7 126.8 L759.7 126.1 L762.7 125.5 L765.7 124.8 L768.7 124.1 L771.7 123.5 L774.7 122.8 L777.7 122.1 L780.7 121.3 L783.7 120.6 L786.7 119.9 L789.7 119.2 L792.7 118.4 L795.7 117.7 L798.7 117.0 L801.7 116.2 L804.7 115.5 L807.7 114.7 L810.7 114.0 L813.7 113.2 L816.7 112.4 L819.7 111.7 L822.7 110.9 L825.7 110.1 L828.7 109.4 L831.7 108.6 L834.7 107.8 L837.7 107.1 L840.7 106.3 L843.7 105.6 L846.7 104.9 L849.7 104.2 L852.7 103.4 L855.7 102.7 L858.7 102.0 L861.7 101.3 L864.7 100.5 L867.7 99.7 L870.7 99.0 L873.7 98.2 L876.7 97.4 L879.7 96.6 L882.7 95.8 L885.7 95.0 L888.7 94.2 L891.7 93.3 L894.7 92.5 L897.7 91.6 L900.7 90.7 L903.7 89.8 L906.7 89.0 L909.7 88.1 L912.7 87.2 L915.7 86.4 L918.7 85.6 L921.7 84.8 L924.7 84.0 L927.7 83.3 L930.7 82.5 L933.7 81.8 L936.7 81.0 L939.7 80.3 L942.7 79.6 L945.7 78.9 L948.7 78.2 L951.7 77.5 L954.7 76.9 L957.7 76.2 L960.7 75.5 L963.7 74.9 L966.7 74.2 L969.7 73.5 L972.7 72.9 L975.7 72.3 L978.7 71.7 L981.7 71.1 L984.7 70.5 L987.7 69.9 L990.7 69.4 L993.7 68.8 L996.7 68.3 L999.7 67.7 L1002.7 67.2 L1005.7 66.7 L1008.7 66.2 L1011.7 65.7 L1014.7 65.2 L1017.7 64.8 L1020.7 64.3 L1023.7 63.9 L1026.7 63.5 L1029.7 63.1 L1032.7 62.7 L1035.7 62.4 L1038.7 62.0 L1041.7 61.7 L1044.7 61.3 L1047.7 61.0 L1050.7 60.7 L1053.7 60.3 L1056.7 60.0 L1059.7 59.7 L1062.7 59.5 L1065.7 59.2 L1068.7 58.9 L1071.7 58.7 L1074.7 58.5 L1077.7 58.2 L1080.7 58.0 L1083.7 57.8 L1086.7 57.5 L1089.7 57.3 L1092.7 57.1 L1095.7 56.9 L1098.7 56.7 L1101.7 56.6 L1104.7 56.5 L1107.7 56.4 L1110.7 56.4 L1113.7 56.4 L1116.7 56.4 L1119.7 56.4 L1122.7 56.4 L1125.7 56.4 L1128.7 56.4 L1131.7 56.4 L1134.7 56.4 L1137.7 56.4 L1140.7 56.4 L1143.7 56.4 L1146.7 56.4 L1149.7 56.4 L1152.7 56.4 L1155.7 56.4 L1158.7 56.4 L1161.7 56.4 L1164.7 56.5 L1167.7 56.7 L1170.7 56.9 L1173.7 57.1 L1176.7 57.3 L1179.7 57.5 L1182.7 57.7 L1185.7 58.0 L1188.7 58.2 L1191.7 58.4 L1194.7 58.6 L1197.7 58.8 L1200.7 59.1 L1203.7 59.3 L1206.7 59.5 L1209.7 59.8 L1212.7 60.0 L1215.7 60.3 L1217.0 60.4" fill="none" stroke="#ff00ff" stroke-width="1.25"/>
<path d="M48.7 145.0 L51.7 143.7 L54.7 142.4 L57.7 141.1 L60.7 139.8 L63.7 138.5 L66.7 137.2 L69.7 135.9 L72.7 134.6 L75.7 133.3 L78.7 131.9 L81.7 130.6 L84.7 129.3 L87.7 128.1 L90.7 127.0 L93.7 126.0 L96.7 125.1 L99.7 124.1 L102.7 123.2 L105.7 122.3 L108.7 121.5 L111.7 120.7 L114.7 119.9 L117.7 119.1 L120.7 118.4 L123.7 117.7 L126.7 117.0 L129.7 116.4 L132.7 115.8 L135.7 115.2 L138.7 114.7 L141.7 114.1 L144.7 113.6 L147.7 113.1 L150.7 112.6 L153.7 112.2 L156.7 111.8 L159.7 111.4 L162.7 111.0 L165.7 110.7 L168.7 110.4 L171.7 110.1 L174.7 109.8 L177.7 109.6 L180.7 109.3 L183.7 109.1 L186.7 108.8 L189.7 108.6 L192.7 108.4 L195.7 108.2 L198.7 108.0 L201.7 107.8 L204.7 107.7 L207.7 107.5 L210.7 107.4 L213.7 107.2 L216.7 107.1 L219.7 107.0 L222.7 106.8 L225.7 106.7 L228.7 106.6 L231.7 106.4 L234.7 106.3 L237.7 106.2 L240.7 106.1 L243.7 106.0 L246.7 106.0 L249.7 105.9 L252.7 105.8 L255.7 105.8 L258.7 105.8 L261.7 105.8 L264.7 105.9 L267.7 106.0 L270.7 106.2 L273.7 106.4 L276.7 106.6 L279.7 106.8 L282.7 107.0 L285.7 107.3 L288.7 107.5 L291.7 107.7 L294.7 107.9 L297.7 108.0 L300.7 108.2 L303.7 108.3 L306.7 108.5 L309.7 108.7 L312.7 108.8 L315.7 109.0 L318.7 109.2 L321.7 109.4 L324.7 109.7 L327.7 110.0 L330.7 110.2 L333.7 110.6 L336.7 110.9 L339.7 111.2 L342.7 111.6 L345.7 111.9 L348.7 112.2 L351.7 112.6 L354.7 112.9 L357.7 113.2 L360.7 113.5 L363.7 113.8 L366.7 114.2 L369.7 114.5 L372.7 114.8 L375.7 115.1 L378.7 115.4 L381.7 115.8 L384.7 116.1 L387.7 116.4 L390.7 116.8 L393.7 117.2 L396.7 117.5 L399.7 117.9 L402.7 118.3 L405.7 118.7 L408.7 119.2 L411.7 119.6 L414.7 120.1 L417.7 120.6 L420.7 121.1 L423.7 121.6 L426.7 122.1 L429.7 122.7 L432.7 123.2 L435.7 123.7 L438.7 124.3 L441.7 124.8 L444.7 125.3 L447.7 125.8 L450.7 126.3 L453.7 126.8 L456.7 127.3 L459.7 127.8 L462.7 128.3 L465.7 128.8 L468.7 129.3 L471.7 129.8 L474.7 130.3 L477.7 130.7 L480.7 131.1 L483.7 131.5 L486.7 131.8 L489.7 132.2 L492.7 132.5 L495.7 132.8 L498.7 133.2 L501.7 133.5 L504.7 133.8 L507.7 134.1 L510.7 134.3 L513.7 134.6 L516.7 134.8 L519.7 135.1 L522.7 135.3 L525.7 135.5 L528.7 135.6 L531.7 135.8 L534.7 136.0 L537.7 136.1 L540.7 136.3 L543.7 136.4 L546.7 136.5 L549.7 136.7 L552.7 136.8 L555.7 136.9 L558.7 136.9 L561.7 137.0 L564.7 137.0 L567.7 137.0 L570.7 137.0 L573.7 137.0 L576.7 137.0 L579.7 137.0 L582.7 137.0 L585.7 137.0 L588.7 137.0 L591.7 137.0 L594.7 137.0 L597.7 137.0 L600.7 137.0 L603.7 137.0 L606.7 137.0 L609.7 137.0 L612.7 137.0 L615.7 137.0 L618.7 136.9 L621.7 136.9 L624.7 136.8 L627.7 136.6 L630.7 136.5 L633.7 136.3 L636.7 136.1 L639.7 135.9 L642.7 135.7 L645.7 135.5 L648.7 135.3 L651.7 135.1 L654.7 135.0 L657.7 134.8 L660.7 134.6 L663.7 134.5 L666.7 134.4 L669.7 134.3 L672.7 134.2 L675.7 134.1 L678.7 134.0 L681.7 133.9 L684.7 133.9 L687.7 133.8 L690.7 133.7 L693.7 133.6 L696.7 133.5 L699.7 133.4 L702.7 133.2 L705.7 133.1 L708.7 133.0 L711.7 132.8 L714.7 132.7 L717.7 132.5 L720.7 132.3 L723.7 132.1 L726.7 131.9 L729.7 131.6 L732.7 131.4 L735.7 131.1 L738.7 130.7 L741.7 130.3 L744.7 129.9 L747.7 129.4 L750.7 129.0 L753.7 128.5 L756.7 128.1 L759.7 127.7 L762.7 127.4 L765.7 127.0 L768.7 126.6 L771.7 126.2 L774.7 125.8 L777.7 125.4 L780.7 125.0 L783.7 124.6 L786.7 124.2 L789.7 123.9 L792.7 123.5 L795.7 123.1 L798.7 122.6 L801.7 122.2 L804.7 121.8 L807.7 121.4 L810.7 120.9 L813.7 120.5 L816.7 120.0 L819.7 119.6 L822.7 119.1 L825.7 118.7 L828.7 118.2 L831.7 117.8 L834.7 117.4 L837.7 117.0 L840.7 116.6 L843.7 116.3 L846.7 115.9 L849.7 115.6 L852.7 115.2 L855.7 114.9 L858.7 114.6 L861.7 114.3 L864.7 114.0 L867.7 113.7 L870.7 113.3 L873.7 113.0 L876.7 112.7 L879.7 112.4 L882.7 112.1 L885.7 111.8 L888.7 111.5 L891.7 111.2 L894.7 110.9 L897.7 110.7 L900.7 110.5 L903.7 110.3 L906.7 110.1 L909.7 109.9 L912.7 109.8 L915.7 109.6 L918.7 109.5 L921.7 109.4 L924.7 109.2 L927.7 109.1 L930.7 109.0 L933.7 108.9 L936.7 108.7 L939.7 108.6 L942.7 108.5 L945.7 108.3 L948.7 108.1 L951.7 108.0 L954.7 107.8 L957.7 107.6 L960.7 107.5 L963.7 107.3 L966.7 107.1 L969.7 106.9 L972.7 106.8 L975.7 106.6 L978.7 106.5 L981.7 106.3 L984.7 106.2 L987.7 106.0 L990.7 105.9 L993.7 105.7 L996.7 105.6 L999.7 105.5 L1002.7 105.4 L1005.7 105.3 L1008.7 105.2 L1011.7 105.1 L1014.7 105.1 L1017.7 105.1 L1020.7 105.1 L1023.7 105.1 L1026.7 105.1 L1029.7 105.1 L1032.7 105.1 L1035.7 105.1 L1038.7 105.1 L1041.7 105.1 L1044.7 105.1 L1047.7 105.1 L1050.7 105.1 L1053.7 105.1 L1056.7 105.1 L1059.7 105.1 L1062.7 105.1 L1065.7 105.1 L1068.7 105.1 L1071.7 105.1 L1074.7 105.1 L1077.7 105.1 L1080.7 105.1 L1083.7 105.1 L1086.7 105.1 L1089.7 105.1 L1092.7 105.1 L1095.7 105.1 L1098.7 105.1 L1101.7 105.1 L1104.7 105.1 L1107.7 105.1 L1110.7 105.1 L1113.7 105.1 L1116.7 105.1 L1119.7 105.1 L1122.7 105.1 L1125.7 105.1 L1128.7 105.2 L1131.7 105.2 L1134.7 105.3 L1137.7 105.4 L1140.7 105.6 L1143.7 105.7 L1146.7 105.9 L1149.7 106.1 L1152.7 106.2 L1155.7 106.4 L1158.7 106.6 L1161.7 106.7 L1164.7 106.9 L1167.7 107.0 L1170.7 107.2 L1173.7 107.3 L1176.7 107.5 L1179.7 107.6 L1182.7 107.8 L1185.7 108.0 L1188.7 108.1 L1191.7 108.3 L1194.7 108.5 L1197.7 108.7 L1200.7 108.8 L1203.7 109.0 L1206.7 109.2 L1209.7 109.4 L1212.7 109.5 L1215.7 109.7 L1217.0 109.8" fill="none" stroke="#00a8a8" stroke-width="1.25"/>
<path d="M48.7 169.4 L51.7 168.1 L54.7 166.9 L57.7 165.6 L60.7 164.4 L63.7 163.2 L66.7 162.0 L69.7 160.8 L72.7 159.6 L75.7 158.4 L78.7 157.2 L81.7 156.1 L84.7 154.9 L87.7 153.9 L90.7 153.0 L93.7 152.0 L96.7 151.2 L99.7 150.3 L102.7 149.4 L105.7 148.6 L108.7 147.8 L111.7 147.1 L114.7 146.3 L117.7 145.7 L120.7 145.0 L123.7 144.4 L126.7 143.8 L129.7 143.3 L132.7 142.8 L135.7 142.4 L138.7 141.9 L141.7 141.5 L144.7 141.2 L147.7 140.8 L150.7 140.4 L153.7 140.1 L156.7 139.8 L159.7 139.5 L162.7 139.2 L165.7 138.9 L168.7 138.6 L171.7 138.3 L174.7 138.1 L177.7 137.8 L180.7 137.5 L183.7 137.3 L186.7 137.0 L189.7 136.8 L192.7 136.6 L195.7 136.3 L198.7 136.1 L201.7 135.9 L204.7 135.7 L207.7 135.5 L210.7 135.4 L213.7 135.2 L216.7 135.0 L219.7 134.9 L222.7 134.7 L225.7 134.6 L228.7 134.5 L231.7 134.3 L234.7 134.2 L237.7 134.1 L240.7 134.0 L243.7 133.8 L246.7 133.7 L249.7 133.6 L252.7 133.5 L255.7 133.4 L258.7 133.3 L261.7 133.2 L264.7 133.1 L267.7 133.1 L270.7 133.0 L273.7 132.9 L276.7 132.8 L279.7 132.7 L282.7 132.7 L285.7 132.6 L288.7 132.5 L291.7 132.5 L294.7 132.5 L297.7 132.5 L300.7 132.5 L303.7 132.4 L306.7 132.4 L309.7 132.4 L312.7 132.4 L315.7 132.4 L318.7 132.4 L321.7 132.4 L324.7 132.4 L327.7 132.4 L330.7 132.4 L333.7 132.4 L336.7 132.4 L339.7 132.4 L342.7 132.3 L345.7 132.3 L348.7 132.3 L351.7 132.3 L354.7 132.3 L357.7 132.3 L360.7 132.2 L363.7 132.2 L366.7 132.1 L369.7 132.1 L372.7 132.0 L375.7 132.0 L378.7 131.9 L381.7 131.9 L384.7 131.9 L387.7 131.8 L390.7 131.8 L393.7 131.8 L396.7 131.8 L399.7 131.8 L402.7 131.8 L405.7 131.8 L408.7 131.8 L411.7 131.8 L414.7 131.7 L417.7 131.7 L420.7 131.7 L423.7 131.7 L426.7 131.7 L429.7 131.7 L432.7 131.7 L435.7 131.7 L438.7 131.7 L441.7 131.7 L444.7 131.7 L447.7 131.7 L450.7 131.7 L453.7 131.7 L456.7 131.7 L459.7 131.7 L462.7 131.7 L465.7 131.6 L468.7 131.6 L471.7 131.6 L474.7 131.6 L477.7 131.6 L480.7 131.6 L483.7 131.6 L486.7 131.6 L489.7 131.6 L492.7 131.6 L495.7 131.6 L498.7 131.6 L501.7 131.6 L504.7 131.6 L507.7 131.6 L510.7 131.6 L513.7 131.6 L516.7 131.6 L519.7 131.6 L522.7 131.6 L525.7 131.6 L528.7 131.6 L531.7 131.6 L534.7 131.6 L537.7 131.6 L540.7 131.6 L543.7 131.5 L546.7 131.5 L549.7 131.5 L552.7 131.5 L555.7 131.5 L558.7 131.5 L561.7 131.5 L564.7 131.5 L567.7 131.5 L570.7 131.5 L573.7 131.5 L576.7 131.5 L579.7 131.5 L582.7 131.5 L585.7 131.5 L588.7 131.5 L591.7 131.5 L594.7 131.5 L597.7 131.5 L600.7 131.5 L603.7 131.5 L606.7 131.5 L609.7 131.5 L612.7 131.5 L615.7 131.5 L618.7 131.5 L621.7 131.5 L624.7 131.5 L627.7 131.5 L630.7 131.5 L633.7 131.5 L636.7 131.5 L639.7 131.5 L642.7 131.5 L645.7 131.5 L648.7 131.5 L651.7 131.5 L654.7 131.5 L657.7 131.5 L660.7 131.5 L663.7 131.5 L666.7 131.5 L669.7 131.5 L672.7 131.5 L675.7 131.5 L678.7 131.5 L681.7 131.5 L684.7 131.5 L687.7 131.5 L690.7 131.5 L693.7 131.5 L696.7 131.5 L699.7 131.5 L702.7 131.5 L705.7 131.5 L708.7 131.5 L711.7 131.5 L714.7 131.5 L717.7 131.5 L720.7 131.5 L723.7 131.5 L726.7 131.5 L729.7 131.5 L732.7 131.5 L735.7 131.5 L738.7 131.5 L741.7 131.5 L744.7 131.5 L747.7 131.5 L750.7 131.5 L753.7 131.5 L756.7 131.5 L759.7 131.5 L762.7 131.5 L765.7 131.5 L768.7 131.5 L771.7 131.5 L774.7 131.5 L777.7 131.5 L780.7 131.5 L783.7 131.5 L786.7 131.5 L789.7 131.5 L792.7 131.5 L795.7 131.5 L798.7 131.5 L801.7 131.5 L804.7 131.5 L807.7 131.5 L810.7 131.5 L813.7 131.5 L816.7 131.5 L819.7 131.5 L822.7 131.5 L825.7 131.5 L828.7 131.5 L831.7 131.5 L834.7 131.5 L837.7 131.5 L840.7 131.5 L843.7 131.5 L846.7 131.5 L849.7 131.5 L852.7 131.5 L855.7 131.5 L858.7 131.5 L861.7 131.5 L864.7 131.5 L867.7 131.5 L870.7 131.5 L873.7 131.5 L876.7 131.5 L879.7 131.5 L882.7 131.5 L885.7 131.5 L888.7 131.5 L891.7 131.5 L894.7 131.5 L897.7 131.5 L900.7 131.5 L903.7 131.5 L906.7 131.5 L909.7 131.5 L912.7 131.5 L915.7 131.5 L918.7 131.5 L921.7 131.5 L924.7 131.5 L927.7 131.5 L930.7 131.5 L933.7 131.5 L936.7 131.5 L939.7 131.5 L942.7 131.5 L945.7 131.5 L948.7 131.5 L951.7 131.5 L954.7 131.5 L957.7 131.5 L960.7 131.5 L963.7 131.5 L966.7 131.5 L969.7 131.5 L972.7 131.5 L975.7 131.5 L978.7 131.5 L981.7 131.5 L984.7 131.5 L987.7 131.5 L990.7 131.6 L993.7 131.6 L996.7 131.6 L999.7 131.6 L1002.7 131.6 L1005.7 131.6 L1008.7 131.6 L1011.7 131.6 L1014.7 131.6 L1017.7 131.6 L1020.7 131.6 L1023.7 131.6 L1026.7 131.7 L1029.7 131.7 L1032.7 131.7 L1035.7 131.7 L1038.7 131.7 L1041.7 131.7 L1044.7 131.7 L1047.7 131.7 L1050.7 131.7 L1053.7 131.8 L1056.7 131.8 L1059.7 131.8 L1062.7 131.8 L1065.7 131.8 L1068.7 131.8 L1071.7 131.8 L1074.7 131.9 L1077.7 131.9 L1080.7 131.9 L1083.7 132.0 L1086.7 132.0 L1089.7 132.0 L1092.7 132.1 L1095.7 132.1 L1098.7 132.2 L1101.7 132.2 L1104.7 132.2 L1107.7 132.3 L1110.7 132.3 L1113.7 132.4 L1116.7 132.5 L1119.7 132.5 L1122.7 132.6 L1125.7 132.6 L1128.7 132.7 L1131.7 132.8 L1134.7 132.8 L1137.7 132.9 L1140.7 133.0 L1143.7 133.0 L1146.7 133.1 L1149.7 133.2 L1152.7 133.2 L1155.7 133.3 L1158.7 133.4 L1161.7 133.4 L1164.7 133.5 L1167.7 133.6 L1170.7 133.7 L1173.7 133.8 L1176.7 133.9 L1179.7 134.0 L1182.7 134.2 L1185.7 134.3 L1188.7 134.4 L1191.7 134.5 L1194.7 134.6 L1197.7 134.8 L1200.7 134.9 L1203.7 135.1 L1206.7 135.2 L1209.7 135.4 L1212.7 135.6 L1215.7 135.7 L1217.0 135.8" fill="none" stroke="#ff0000" stroke-width="1.25"/>
<path d="M48.7 196.0 L51.7 194.6 L54.7 193.3 L57.7 192.1 L60.7 190.8 L63.7 189.6 L66.7 188.5 L69.7 187.4 L72.7 186.4 L75.7 185.4 L78.7 184.4 L81.7 183.5 L84.7 182.6 L87.7 181.7 L90.7 180.9 L93.7 180.1 L96.7 179.3 L99.7 178.5 L102.7 177.7 L105.7 176.9 L108.7 176.1 L111.7 175.4 L114.7 174.7 L117.7 174.0 L120.7 173.4 L123.7 172.8 L126.7 172.2 L129.7 171.7 L132.7 171.2 L135.7 170.8 L138.7 170.4 L141.7 170.0 L144.7 169.6 L147.7 169.3 L150.7 168.9 L153.7 168.6 L156.7 168.3 L159.7 167.9 L162.7 167.6 L165.7 167.3 L168.7 167.0 L171.7 166.6 L174.7 166.3 L177.7 166.0 L180.7 165.6 L183.7 165.3 L186.7 165.0 L189.7 164.7 L192.7 164.4 L195.7 164.1 L198.7 163.8 L201.7 163.5 L204.7 163.3 L207.7 163.0 L210.7 162.8 L213.7 162.6 L216.7 162.4 L219.7 162.2 L222.7 162.0 L225.7 161.8 L228.7 161.7 L231.7 161.5 L234.7 161.4 L237.7 161.2 L240.7 161.1 L243.7 160.9 L246.7 160.7 L249.7 160.6 L252.7 160.4 L255.7 160.2 L258.7 160.1 L261.7 159.9 L264.7 159.7 L267.7 159.5 L270.7 159.2 L273.7 159.0 L276.7 158.8 L279.7 158.6 L282.7 158.4 L285.7 158.1 L288.7 157.9 L291.7 157.6 L294.7 157.4 L297.7 157.1 L300.7 156.9 L303.7 156.6 L306.7 156.3 L309.7 156.1 L312.7 155.8 L315.7 155.5 L318.7 155.2 L321.7 154.9 L324.7 154.7 L327.7 154.3 L330.7 154.0 L333.7 153.7 L336.7 153.4 L339.7 153.1 L342.7 152.8 L345.7 152.4 L348.7 152.1 L351.7 151.7 L354.7 151.4 L357.7 151.0 L360.7 150.6 L363.7 150.2 L366.7 149.8 L369.7 149.4 L372.7 149.0 L375.7 148.6 L378.7 148.1 L381.7 147.7 L384.7 147.2 L387.7 146.8 L390.7 146.3 L393.7 145.9 L396.7 145.4 L399.7 144.9 L402.7 144.5 L405.7 144.0 L408.7 143.5 L411.7 143.1 L414.7 142.6 L417.7 142.0 L420.7 141.5 L423.7 141.0 L426.7 140.5 L429.7 140.0 L432.7 139.5 L435.7 139.0 L438.7 138.5 L441.7 137.9 L444.7 137.4 L447.7 137.0 L450.7 136.5 L453.7 136.0 L456.7 135.5 L459.7 135.0 L462.7 134.5 L465.7 134.0 L468.7 133.5 L471.7 133.1 L474.7 132.6 L477.7 132.2 L480.7 131.8 L483.7 131.5 L486.7 131.2 L489.7 130.9 L492.7 130.6 L495.7 130.3 L498.7 130.1 L501.7 129.8 L504.7 129.6 L507.7 129.3 L510.7 129.1 L513.7 128.9 L516.7 128.7 L519.7 128.5 L522.7 128.3 L525.7 128.1 L528.7 128.0 L531.7 127.8 L534.7 127.6 L537.7 127.5 L540.7 127.3 L543.7 127.2 L546.7 127.0 L549.7 126.9 L552.7 126.8 L555.7 126.7 L558.7 126.6 L561.7 126.5 L564.7 126.5 L567.7 126.5 L570.7 126.5 L573.7 126.5 L576.7 126.5 L579.7 126.6 L582.7 126.6 L585.7 126.6 L588.7 126.6 L591.7 126.7 L594.7 126.7 L597.7 126.8 L600.7 126.8 L603.7 126.8 L606.7 126.9 L609.7 126.9 L612.7 127.0 L615.7 127.0 L618.7 127.1 L621.7 127.2 L624.7 127.3 L627.7 127.3 L630.7 127.5 L633.7 127.6 L636.7 127.7 L639.7 127.8 L642.7 127.9 L645.7 128.0 L648.7 128.2 L651.7 128.3 L654.7 128.4 L657.7 128.6 L660.7 128.7 L663.7 128.8 L666.7 128.9 L669.7 129.0 L672.7 129.1 L675.7 129.2 L678.7 129.4 L681.7 129.5 L684.7 129.6 L687.7 129.7 L690.7 129.8 L693.7 130.0 L696.7 130.1 L699.7 130.2 L702.7 130.4 L705.7 130.5 L708.7 130.6 L711.7 130.8 L714.7 130.9 L717.7 131.1 L720.7 131.3 L723.7 131.5 L726.7 131.7 L729.7 131.9 L732.7 132.1 L735.7 132.4 L738.7 132.8 L741.7 133.1 L744.7 133.5 L747.7 134.0 L750.7 134.4 L753.7 134.8 L756.7 135.1 L759.7 135.5 L762.7 135.9 L765.7 136.2 L768.7 136.6 L771.7 136.9 L774.7 137.2 L777.7 137.6 L780.7 137.9 L783.7 138.3 L786.7 138.6 L789.7 139.0 L792.7 139.3 L795.7 139.7 L798.7 140.1 L801.7 140.5 L804.7 140.9 L807.7 141.3 L810.7 141.7 L813.7 142.2 L816.7 142.6 L819.7 143.1 L822.7 143.6 L825.7 144.0 L828.7 144.5 L831.7 144.9 L834.7 145.3 L837.7 145.7 L840.7 146.1 L843.7 146.5 L846.7 146.8 L849.7 147.2 L852.7 147.5 L855.7 147.8 L858.7 148.2 L861.7 148.5 L864.7 148.8 L867.7 149.2 L870.7 149.5 L873.7 149.8 L876.7 150.1 L879.7 150.4 L882.7 150.7 L885.7 151.1 L888.7 151.4 L891.7 151.6 L894.7 151.9 L897.7 152.2 L900.7 152.5 L903.7 152.7 L906.7 153.0 L909.7 153.2 L912.7 153.5 L915.7 153.7 L918.7 153.9 L921.7 154.1 L924.7 154.4 L927.7 154.6 L930.7 154.8 L933.7 155.0 L936.7 155.2 L939.7 155.4 L942.7 155.5 L945.7 155.7 L948.7 155.9 L951.7 156.0 L954.7 156.2 L957.7 156.3 L960.7 156.5 L963.7 156.6 L966.7 156.7 L969.7 156.9 L972.7 157.0 L975.7 157.1 L978.7 157.2 L981.7 157.3 L984.7 157.4 L987.7 157.5 L990.7 157.6 L993.7 157.7 L996.7 157.8 L999.7 157.9 L1002.7 157.9 L1005.7 158.0 L1008.7 158.1 L1011.7 158.2 L1014.7 158.2 L1017.7 158.3 L1020.7 158.3 L1023.7 158.4 L1026.7 158.5 L1029.7 158.5 L1032.7 158.6 L1035.7 158.6 L1038.7 158.6 L1041.7 158.7 L1044.7 158.7 L1047.7 158.8 L1050.7 158.8 L1053.7 158.9 L1056.7 158.9 L1059.7 158.9 L1062.7 159.0 L1065.7 159.0 L1068.7 159.0 L1071.7 159.1 L1074.7 159.1 L1077.7 159.2 L1080.7 159.2 L1083.7 159.2 L1086.7 159.3 L1089.7 159.3 L1092.7 159.3 L1095.7 159.4 L1098.7 159.4 L1101.7 159.4 L1104.7 159.5 L1107.7 159.5 L1110.7 159.5 L1113.7 159.6 L1116.7 159.6 L1119.7 159.6 L1122.7 159.6 L1125.7 159.7 L1128.7 159.7 L1131.7 159.7 L1134.7 159.8 L1137.7 159.8 L1140.7 159.8 L1143.7 159.8 L1146.7 159.9 L1149.7 159.9 L1152.7 159.9 L1155.7 160.0 L1158.7 160.0 L1161.7 160.1 L1164.7 160.1 L1167.7 160.1 L1170.7 160.2 L1173.7 160.2 L1176.7 160.3 L1179.7 160.4 L1182.7 160.5 L1185.7 160.5 L1188.7 160.6 L1191.7 160.7 L1194.7 160.8 L1197.7 160.9 L1200.7 161.1 L1203.7 161.2 L1206.7 161.3 L1209.7 161.4 L1212.7 161.5 L1215.7 161.6 L1217.0 161.7" fill="none" stroke="#0000ff" stroke-width="1.25"/>
<path d="M48.7 236.0 L51.7 234.8 L54.7 233.6 L57.7 232.5 L60.7 231.3 L63.7 230.2 L66.7 229.1 L69.7 228.0 L72.7 226.9 L75.7 225.8 L78.7 224.7 L81.7 223.7 L84.7 222.7 L87.7 221.8 L90.7 221.0 L93.7 220.3 L96.7 219.7 L99.7 219.1 L102.7 218.5 L105.7 217.8 L108.7 217.1 L111.7 216.4 L114.7 215.7 L117.7 215.0 L120.7 214.4 L123.7 213.8 L126.7 213.2 L129.7 212.6 L132.7 212.1 L135.7 211.5 L138.7 211.0 L141.7 210.4 L144.7 209.9 L147.7 209.4 L150.7 208.9 L153.7 208.4 L156.7 207.9 L159.7 207.5 L162.7 207.1 L165.7 206.7 L168.7 206.3 L171.7 205.9 L174.7 205.6 L177.7 205.2 L180.7 204.9 L183.7 204.6 L186.7 204.3 L189.7 203.9 L192.7 203.6 L195.7 203.3 L198.7 203.1 L201.7 202.8 L204.7 202.5 L207.7 202.2 L210.7 201.9 L213.7 201.6 L216.7 201.4 L219.7 201.1 L222.7 200.9 L225.7 200.6 L228.7 200.4 L231.7 200.1 L234.7 199.9 L237.7 199.7 L240.7 199.4 L243.7 199.2 L246.7 198.9 L249.7 198.7 L252.7 198.4 L255.7 198.2 L258.7 197.9 L261.7 197.6 L264.7 197.3 L267.7 197.0 L270.7 196.7 L273.7 196.3 L276.7 196.0 L279.7 195.7 L282.7 195.3 L285.7 195.0 L288.7 194.6 L291.7 194.2 L294.7 193.8 L297.7 193.4 L300.7 193.0 L303.7 192.5 L306.7 192.1 L309.7 191.6 L312.7 191.1 L315.7 190.6 L318.7 190.1 L321.7 189.6 L324.7 189.0 L327.7 188.5 L330.7 187.9 L333.7 187.3 L336.7 186.7 L339.7 186.1 L342.7 185.5 L345.7 184.9 L348.7 184.3 L351.7 183.7 L354.7 183.0 L357.7 182.4 L360.7 181.7 L363.7 181.1 L366.7 180.4 L369.7 179.7 L372.7 179.1 L375.7 178.4 L378.7 177.7 L381.7 177.0 L384.7 176.3 L387.7 175.6 L390.7 174.8 L393.7 174.1 L396.7 173.4 L399.7 172.6 L402.7 171.9 L405.7 171.1 L408.7 170.3 L411.7 169.5 L414.7 168.7 L417.7 167.8 L420.7 166.9 L423.7 166.1 L426.7 165.2 L429.7 164.3 L432.7 163.5 L435.7 162.6 L438.7 161.7 L441.7 160.9 L444.7 160.1 L447.7 159.3 L450.7 158.5 L453.7 157.7 L456.7 157.0 L459.7 156.3 L462.7 155.6 L465.7 154.9 L468.7 154.2 L471.7 153.5 L474.7 152.8 L477.7 152.1 L480.7 151.4 L483.7 150.7 L486.7 149.9 L489.7 149.2 L492.7 148.4 L495.7 147.6 L498.7 146.8 L501.7 145.9 L504.7 145.1 L507.7 144.3 L510.7 143.5 L513.7 142.7 L516.7 141.9 L519.7 141.1 L522.7 140.3 L525.7 139.6 L528.7 138.9 L531.7 138.2 L534.7 137.5 L537.7 136.8 L540.7 136.2 L543.7 135.5 L546.7 134.9 L549.7 134.3 L552.7 133.7 L555.7 133.1 L558.7 132.6 L561.7 132.1 L564.7 131.6 L567.7 131.2 L570.7 130.8 L573.7 130.4 L576.7 130.1 L579.7 129.7 L582.7 129.4 L585.7 129.1 L588.7 128.8 L591.7 128.4 L594.7 128.1 L597.7 127.6 L600.7 127.2 L603.7 126.8 L606.7 126.4 L609.7 126.1 L612.7 125.9 L615.7 125.7 L618.7 125.6 L621.7 125.5 L624.7 125.3 L627.7 125.2 L630.7 125.1 L633.7 125.0 L636.7 124.9 L639.7 124.8 L642.7 124.8 L645.7 124.7 L648.7 124.6 L651.7 124.6 L654.7 124.6 L657.7 124.5 L660.7 124.5 L663.7 124.5 L666.7 124.5 L669.7 124.6 L672.7 124.8 L675.7 125.0 L678.7 125.3 L681.7 125.6 L684.7 125.9 L687.7 126.2 L690.7 126.6 L693.7 126.9 L696.7 127.3 L699.7 127.6 L702.7 127.9 L705.7 128.3 L708.7 128.6 L711.7 129.0 L714.7 129.3 L717.7 129.7 L720.7 130.1 L723.7 130.5 L726.7 130.9 L729.7 131.3 L732.7 131.7 L735.7 132.1 L738.7 132.6 L741.7 133.0 L744.7 133.5 L747.7 134.0 L750.7 134.5 L753.7 135.0 L756.7 135.5 L759.7 136.1 L762.7 136.6 L765.7 137.2 L768.7 137.8 L771.7 138.5 L774.7 139.1 L777.7 139.7 L780.7 140.4 L783.7 141.1 L786.7 141.7 L789.7 142.4 L792.7 143.1 L795.7 143.8 L798.7 144.6 L801.7 145.3 L804.7 146.0 L807.7 146.8 L810.7 147.5 L813.7 148.3 L816.7 149.1 L819.7 150.0 L822.7 150.8 L825.7 151.6 L828.7 152.5 L831.7 153.3 L834.7 154.2 L837.7 155.0 L840.7 155.9 L843.7 156.8 L846.7 157.8 L849.7 158.7 L852.7 159.6 L855.7 160.5 L858.7 161.4 L861.7 162.2 L864.7 163.0 L867.7 163.7 L870.7 164.3 L873.7 164.9 L876.7 165.5 L879.7 166.1 L882.7 166.8 L885.7 167.5 L888.7 168.2 L891.7 169.0 L894.7 169.8 L897.7 170.7 L900.7 171.5 L903.7 172.4 L906.7 173.3 L909.7 174.2 L912.7 175.0 L915.7 175.9 L918.7 176.7 L921.7 177.5 L924.7 178.4 L927.7 179.2 L930.7 180.1 L933.7 180.9 L936.7 181.7 L939.7 182.5 L942.7 183.2 L945.7 183.9 L948.7 184.5 L951.7 185.1 L954.7 185.6 L957.7 186.1 L960.7 186.7 L963.7 187.3 L966.7 187.9 L969.7 188.7 L972.7 189.5 L975.7 190.3 L978.7 191.1 L981.7 191.9 L984.7 192.6 L987.7 193.3 L990.7 194.0 L993.7 194.6 L996.7 195.2 L999.7 195.7 L1002.7 196.3 L1005.7 196.8 L1008.7 197.3 L1011.7 197.8 L1014.7 198.3 L1017.7 198.8 L1020.7 199.3 L1023.7 199.7 L1026.7 200.2 L1029.7 200.6 L1032.7 201.1 L1035.7 201.5 L1038.7 201.9 L1041.7 202.4 L1044.7 202.8 L1047.7 203.2 L1050.7 203.6 L1053.7 204.0 L1056.7 204.4 L1059.7 204.8 L1062.7 205.1 L1065.7 205.5 L1068.7 205.8 L1071.7 206.1 L1074.7 206.4 L1077.7 206.7 L1080.7 207.0 L1083.7 207.3 L1086.7 207.5 L1089.7 207.8 L1092.7 208.0 L1095.7 208.3 L1098.7 208.5 L1101.7 208.7 L1104.7 208.9 L1107.7 209.2 L1110.7 209.4 L1113.7 209.6 L1116.7 209.8 L1119.7 210.0 L1122.7 210.2 L1125.7 210.4 L1128.7 210.6 L1131.7 210.8 L1134.7 211.0 L1137.7 211.2 L1140.7 211.4 L1143.7 211.6 L1146.7 211.7 L1149.7 211.9 L1152.7 212.1 L1155.7 212.2 L1158.7 212.3 L1161.7 212.5 L1164.7 212.6 L1167.7 212.7 L1170.7 212.8 L1173.7 212.9 L1176.7 213.0 L1179.7 213.1 L1182.7 213.2 L1185.7 213.3 L1188.7 213.4 L1191.7 213.5 L1194.7 213.6 L1197.7 213.8 L1200.7 213.9 L1203.7 214.1 L1206.7 214.2 L1209.7 214.4 L1212.7 214.6 L1215.7 214.7 L1217.0 214.8" fill="none" stroke="#00ff00" stroke-width="1.25"/>
<g fill="#c4c4c4" font-size="14.2" stroke="#c4c4c4" stroke-width="0.2">
<text x="5.9" y="45.9" textLength="33.7" lengthAdjust="spacingAndGlyphs">16dB</text>
<text x="5.9" y="63.6" textLength="33.7" lengthAdjust="spacingAndGlyphs">12dB</text>
<text x="14.0" y="81.2" textLength="25.6" lengthAdjust="spacingAndGlyphs">8dB</text>
<text x="14.0" y="98.9" textLength="25.6" lengthAdjust="spacingAndGlyphs">4dB</text>
<text x="14.0" y="116.6" textLength="25.6" lengthAdjust="spacingAndGlyphs">0dB</text>
<text x="9.1" y="134.2" textLength="30.5" lengthAdjust="spacingAndGlyphs">-4dB</text>
<text x="9.1" y="151.9" textLength="30.5" lengthAdjust="spacingAndGlyphs">-8dB</text>
<text x="1.1" y="169.6" textLength="38.5" lengthAdjust="spacingAndGlyphs">-12dB</text>
<text x="1.1" y="187.2" textLength="38.5" lengthAdjust="spacingAndGlyphs">-16dB</text>
<text x="1.1" y="204.9" textLength="38.5" lengthAdjust="spacingAndGlyphs">-20dB</text>
<text x="1.1" y="222.6" textLength="38.5" lengthAdjust="spacingAndGlyphs">-24dB</text>
<text x="1.1" y="240.2" textLength="38.5" lengthAdjust="spacingAndGlyphs">-28dB</text>
<text x="1.1" y="257.9" textLength="38.5" lengthAdjust="spacingAndGlyphs">-32dB</text>
<text x="1232.1" y="45.9" textLength="29.9" lengthAdjust="spacingAndGlyphs">240°</text>
<text x="1232.1" y="63.6" textLength="29.9" lengthAdjust="spacingAndGlyphs">180°</text>
<text x="1232.1" y="81.2" textLength="29.9" lengthAdjust="spacingAndGlyphs">120°</text>
<text x="1240.2" y="98.9" textLength="21.8" lengthAdjust="spacingAndGlyphs">60°</text>
<text x="1248.2" y="116.6" textLength="13.8" lengthAdjust="spacingAndGlyphs">0°</text>
<text x="1235.3" y="134.2" textLength="26.7" lengthAdjust="spacingAndGlyphs">-60°</text>
<text x="1227.3" y="151.9" textLength="34.7" lengthAdjust="spacingAndGlyphs">-120°</text>
<text x="1227.3" y="169.6" textLength="34.7" lengthAdjust="spacingAndGlyphs">-180°</text>
<text x="1227.3" y="187.2" textLength="34.7" lengthAdjust="spacingAndGlyphs">-240°</text>
<text x="1227.3" y="204.9" textLength="34.7" lengthAdjust="spacingAndGlyphs">-300°</text>
<text x="1227.3" y="222.6" textLength="34.7" lengthAdjust="spacingAndGlyphs">-360°</text>
<text x="1227.3" y="240.2" textLength="34.7" lengthAdjust="spacingAndGlyphs">-420°</text>
<text x="1227.3" y="257.9" textLength="34.7" lengthAdjust="spacingAndGlyphs">-480°</text>
<text x="113.5" y="273.7" textLength="33.7" lengthAdjust="spacingAndGlyphs">10Hz</text>
<text x="381.2" y="273.7" textLength="41.7" lengthAdjust="spacingAndGlyphs">100Hz</text>
<text x="656.2" y="273.7" textLength="35.2" lengthAdjust="spacingAndGlyphs">1KHz</text>
<text x="924.0" y="273.7" textLength="43.3" lengthAdjust="spacingAndGlyphs">10KHz</text>
<text x="1191.8" y="273.7" textLength="51.3" lengthAdjust="spacingAndGlyphs">100KHz</text>
</g>
<text x="614" y="35.8" font-size="13" font-weight="bold" fill="#00ff00" textLength="35.5" lengthAdjust="spacingAndGlyphs">V(out)</text>
<g fill="none" stroke="#0000ff" stroke-width="1" shape-rendering="crispEdges">
<path d="M213.5 358.5 L970.5 358.5"/>
<path d="M213.5 358.5 L213.5 415.5"/>
<path d="M213.5 441.5 L213.5 504.5"/>
<path d="M213.5 530.5 L213.5 609.5"/>
<path d="M270.5 358.5 L270.5 394.5"/>
<path d="M270.5 421.5 L270.5 452.5"/>
<path d="M270.5 452.5 L301.5 452.5 L301.5 483.5"/>
<path d="M301.5 504.5 L301.5 520.5"/>
<path d="M301.5 546.5 L301.5 609.5"/>
<path d="M317.5 536.5 L338.5 536.5 L338.5 556.5"/>
<path d="M338.5 583.5 L338.5 609.5"/>
<path d="M354.5 567.5 L369.5 567.5 L369.5 462.5"/>
<path d="M390.5 462.5 L416.5 462.5"/>
<path d="M442.5 462.5 L448.5 462.5"/>
<path d="M411.5 358.5 L411.5 389.5"/>
<path d="M411.5 415.5 L411.5 504.5"/>
<path d="M411.5 530.5 L411.5 609.5"/>
<path d="M442.5 358.5 L442.5 394.5"/>
<path d="M442.5 415.5 L442.5 462.5"/>
<path d="M468.5 447.5 L468.5 358.5"/>
<path d="M468.5 478.5 L468.5 504.5"/>
<path d="M468.5 530.5 L468.5 609.5"/>
<path d="M468.5 494.5 L484.5 494.5"/>
<path d="M505.5 494.5 L510.5 494.5"/>
<path d="M510.5 405.5 L510.5 525.5"/>
<path d="M510.5 405.5 L521.5 405.5"/>
<path d="M510.5 551.5 L510.5 567.5 L521.5 567.5"/>
<path d="M542.5 567.5 L557.5 567.5"/>
<path d="M583.5 567.5 L599.5 567.5"/>
<path d="M620.5 567.5 L635.5 567.5 L635.5 546.5"/>
<path d="M635.5 520.5 L635.5 405.5"/>
<path d="M547.5 405.5 L557.5 405.5"/>
<path d="M583.5 405.5 L609.5 405.5"/>
<path d="M547.5 405.5 L547.5 421.5"/>
<path d="M547.5 441.5 L599.5 441.5"/>
<path d="M599.5 405.5 L599.5 421.5"/>
<path d="M573.5 421.5 L573.5 452.5"/>
<path d="M573.5 478.5 L573.5 509.5"/>
<path d="M573.5 536.5 L573.5 551.5"/>
<path d="M573.5 483.5 L656.5 483.5"/>
<path d="M677.5 483.5 L709.5 483.5"/>
<path d="M635.5 426.5 L729.5 426.5"/>
<path d="M693.5 358.5 L693.5 379.5"/>
<path d="M693.5 405.5 L693.5 536.5"/>
<path d="M693.5 562.5 L693.5 609.5"/>
<path d="M729.5 358.5 L729.5 379.5"/>
<path d="M729.5 405.5 L729.5 468.5"/>
<path d="M693.5 457.5 L698.5 457.5"/>
<path d="M719.5 457.5 L756.5 457.5"/>
<path d="M776.5 457.5 L808.5 457.5 L808.5 530.5"/>
<path d="M808.5 556.5 L808.5 640.5"/>
<path d="M729.5 499.5 L729.5 536.5"/>
<path d="M729.5 562.5 L729.5 609.5"/>
<path d="M729.5 525.5 L761.5 525.5 L761.5 541.5"/>
<path d="M761.5 562.5 L761.5 609.5"/>
<path d="M244.5 468.5 L249.5 468.5"/>
<path d="M218.5 468.5 L202.5 468.5"/>
<path d="M181.5 468.5 L155.5 468.5 L155.5 520.5"/>
<path d="M155.5 546.5 L155.5 609.5"/>
<path d="M244.5 468.5 L244.5 489.5"/>
<path d="M244.5 509.5 L244.5 520.5 L270.5 520.5"/>
<path d="M270.5 483.5 L270.5 536.5"/>
<path d="M270.5 562.5 L270.5 609.5"/>
<path d="M155.5 609.5 L970.5 609.5"/>
<path d="M970.5 358.5 L970.5 489.5"/>
<path d="M970.5 515.5 L970.5 609.5"/>
</g>
<g fill="none" stroke="#000080" stroke-width="1" shape-rendering="crispEdges">
<path d="M270.50 394.50 L270.50 397.20"/>
<path d="M270.50 418.80 L270.50 421.50"/>
<path d="M213.50 415.50 L213.50 418.10"/>
<path d="M213.50 438.90 L213.50 441.50"/>
<path d="M213.50 504.50 L213.50 507.10"/>
<path d="M213.50 527.90 L213.50 530.50"/>
<path d="M270.50 536.50 L270.50 539.10"/>
<path d="M270.50 559.90 L270.50 562.50"/>
<path d="M411.50 389.50 L411.50 392.10"/>
<path d="M411.50 412.90 L411.50 415.50"/>
<path d="M411.50 504.50 L411.50 507.10"/>
<path d="M411.50 527.90 L411.50 530.50"/>
<path d="M468.50 504.50 L468.50 507.10"/>
<path d="M468.50 527.90 L468.50 530.50"/>
<path d="M510.50 525.50 L510.50 528.10"/>
<path d="M510.50 548.90 L510.50 551.50"/>
<path d="M573.50 452.50 L573.50 455.10"/>
<path d="M573.50 475.90 L573.50 478.50"/>
<path d="M573.50 509.50 L573.50 512.20"/>
<path d="M573.50 533.80 L573.50 536.50"/>
<path d="M693.50 379.50 L693.50 382.10"/>
<path d="M693.50 402.90 L693.50 405.50"/>
<path d="M729.50 379.50 L729.50 382.10"/>
<path d="M729.50 402.90 L729.50 405.50"/>
<path d="M635.50 520.50 L635.50 523.10"/>
<path d="M635.50 543.90 L635.50 546.50"/>
<path d="M693.50 536.50 L693.50 539.10"/>
<path d="M693.50 559.90 L693.50 562.50"/>
<path d="M729.50 536.50 L729.50 539.10"/>
<path d="M729.50 559.90 L729.50 562.50"/>
<path d="M808.50 530.50 L808.50 533.10"/>
<path d="M808.50 553.90 L808.50 556.50"/>
<path d="M218.50 468.50 L221.10 468.50"/>
<path d="M241.90 468.50 L244.50 468.50"/>
<path d="M416.50 462.50 L419.10 462.50"/>
<path d="M439.90 462.50 L442.50 462.50"/>
<path d="M521.50 405.50 L524.10 405.50"/>
<path d="M544.90 405.50 L547.50 405.50"/>
<path d="M609.50 405.50 L612.10 405.50"/>
<path d="M632.90 405.50 L635.50 405.50"/>
<path d="M301.50 483.50 L301.50 492.50"/>
<path d="M295.98 492.50 L307.02 492.50"/>
<path d="M295.98 495.50 L307.02 495.50"/>
<path d="M301.50 495.50 L301.50 504.50"/>
<path d="M244.50 489.50 L244.50 498.50"/>
<path d="M238.98 498.50 L250.02 498.50"/>
<path d="M238.98 500.50 L250.02 500.50"/>
<path d="M244.50 500.50 L244.50 509.50"/>
<path d="M442.50 394.50 L442.50 404.50"/>
<path d="M436.98 404.50 L448.02 404.50"/>
<path d="M436.98 406.50 L448.02 406.50"/>
<path d="M442.50 406.50 L442.50 415.50"/>
<path d="M547.50 421.50 L547.50 430.50"/>
<path d="M541.98 430.50 L553.02 430.50"/>
<path d="M541.98 432.50 L553.02 432.50"/>
<path d="M547.50 432.50 L547.50 441.50"/>
<path d="M599.50 421.50 L599.50 430.50"/>
<path d="M593.98 430.50 L605.02 430.50"/>
<path d="M593.98 432.50 L605.02 432.50"/>
<path d="M599.50 432.50 L599.50 441.50"/>
<path d="M761.50 541.50 L761.50 550.50"/>
<path d="M755.98 550.50 L767.02 550.50"/>
<path d="M755.98 552.50 L767.02 552.50"/>
<path d="M761.50 552.50 L761.50 562.50"/>
<path d="M181.50 468.50 L190.50 468.50"/>
<path d="M190.50 462.98 L190.50 474.02"/>
<path d="M193.50 462.98 L193.50 474.02"/>
<path d="M193.50 468.50 L202.50 468.50"/>
<path d="M369.50 462.50 L378.50 462.50"/>
<path d="M378.50 456.98 L378.50 468.02"/>
<path d="M381.50 456.98 L381.50 468.02"/>
<path d="M381.50 462.50 L390.50 462.50"/>
<path d="M484.50 494.50 L493.50 494.50"/>
<path d="M493.50 488.98 L493.50 500.02"/>
<path d="M496.50 488.98 L496.50 500.02"/>
<path d="M496.50 494.50 L505.50 494.50"/>
<path d="M698.50 457.50 L707.50 457.50"/>
<path d="M707.50 451.98 L707.50 463.02"/>
<path d="M710.50 451.98 L710.50 463.02"/>
<path d="M710.50 457.50 L719.50 457.50"/>
<path d="M756.50 457.50 L765.50 457.50"/>
<path d="M765.50 451.98 L765.50 463.02"/>
<path d="M767.50 451.98 L767.50 463.02"/>
<path d="M767.50 457.50 L776.50 457.50"/>
<path d="M656.50 483.50 L665.50 483.50"/>
<path d="M665.50 477.98 L665.50 489.02"/>
<path d="M668.50 477.98 L668.50 489.02"/>
<path d="M668.50 483.50 L677.50 483.50"/>
<path d="M521.50 567.50 L530.50 567.50"/>
<path d="M530.50 561.98 L530.50 573.02"/>
<path d="M532.50 561.98 L532.50 573.02"/>
<path d="M532.50 567.50 L542.50 567.50"/>
<path d="M599.50 567.50 L608.50 567.50"/>
<path d="M608.50 561.98 L608.50 573.02"/>
<path d="M611.50 561.98 L611.50 573.02"/>
<path d="M611.50 567.50 L620.50 567.50"/>
<path d="M254.50 458.06 L254.50 478.94"/>
<path d="M249.50 468.50 L254.50 468.50"/>
<path d="M453.50 452.06 L453.50 472.94"/>
<path d="M448.50 462.50 L453.50 462.50"/>
<path d="M714.50 473.06 L714.50 493.94"/>
<path d="M709.50 483.50 L714.50 483.50"/>
<path d="M301.50 520.50 L301.50 523.10"/>
<path d="M301.50 543.90 L301.50 546.50"/>
<path d="M309.30 536.50 L317.50 536.50"/>
<path d="M338.50 583.50 L338.50 580.80"/>
<path d="M338.50 559.20 L338.50 556.50"/>
<path d="M346.30 567.50 L354.50 567.50"/>
<path d="M557.50 405.50 L560.10 405.50"/>
<path d="M580.90 405.50 L583.50 405.50"/>
<path d="M573.50 413.70 L573.50 421.50"/>
<path d="M557.50 567.50 L560.10 567.50"/>
<path d="M580.90 567.50 L583.50 567.50"/>
<path d="M573.50 560.00 L573.50 551.50"/>
<path d="M155.50 520.50 L155.50 522.80"/>
<path d="M155.50 542.80 L155.50 546.50"/>
<path d="M155.50 522.36 L155.50 525.62"/>
<path d="M154.00 524.32 L157.00 524.32"/>
<path d="M155.50 541.28 L155.50 543.24"/>
<path d="M970.50 489.50 L970.50 491.80"/>
<path d="M970.50 511.80 L970.50 515.50"/>
<path d="M967.90 495.28 L973.10 495.28"/>
<path d="M970.50 492.67 L970.50 497.89"/>
<path d="M967.90 508.32 L973.10 508.32"/>
</g>
<g fill="none" stroke="#000080" stroke-width="1.15">
<path d="M270.50 397.20 L275.72 399.90 L265.28 405.30 L275.72 410.70 L265.28 416.10 L270.50 418.80"/>
<path d="M213.50 418.10 L218.72 420.70 L208.28 425.90 L218.72 431.10 L208.28 436.30 L213.50 438.90"/>
<path d="M213.50 507.10 L218.72 509.70 L208.28 514.90 L218.72 520.10 L208.28 525.30 L213.50 527.90"/>
<path d="M270.50 539.10 L275.72 541.70 L265.28 546.90 L275.72 552.10 L265.28 557.30 L270.50 559.90"/>
<path d="M411.50 392.10 L416.72 394.70 L406.28 399.90 L416.72 405.10 L406.28 410.30 L411.50 412.90"/>
<path d="M411.50 507.10 L416.72 509.70 L406.28 514.90 L416.72 520.10 L406.28 525.30 L411.50 527.90"/>
<path d="M468.50 507.10 L473.72 509.70 L463.28 514.90 L473.72 520.10 L463.28 525.30 L468.50 527.90"/>
<path d="M510.50 528.10 L515.72 530.70 L505.28 535.90 L515.72 541.10 L505.28 546.30 L510.50 548.90"/>
<path d="M573.50 455.10 L578.72 457.70 L568.28 462.90 L578.72 468.10 L568.28 473.30 L573.50 475.90"/>
<path d="M573.50 512.20 L578.72 514.90 L568.28 520.30 L578.72 525.70 L568.28 531.10 L573.50 533.80"/>
<path d="M693.50 382.10 L698.72 384.70 L688.28 389.90 L698.72 395.10 L688.28 400.30 L693.50 402.90"/>
<path d="M729.50 382.10 L734.72 384.70 L724.28 389.90 L734.72 395.10 L724.28 400.30 L729.50 402.90"/>
<path d="M635.50 523.10 L640.72 525.70 L630.28 530.90 L640.72 536.10 L630.28 541.30 L635.50 543.90"/>
<path d="M693.50 539.10 L698.72 541.70 L688.28 546.90 L698.72 552.10 L688.28 557.30 L693.50 559.90"/>
<path d="M729.50 539.10 L734.72 541.70 L724.28 546.90 L734.72 552.10 L724.28 557.30 L729.50 559.90"/>
<path d="M808.50 533.10 L813.72 535.70 L803.28 540.90 L813.72 546.10 L803.28 551.30 L808.50 553.90"/>
<path d="M221.10 468.50 L223.70 463.28 L228.90 473.72 L234.10 463.28 L239.30 473.72 L241.90 468.50"/>
<path d="M419.10 462.50 L421.70 457.28 L426.90 467.72 L432.10 457.28 L437.30 467.72 L439.90 462.50"/>
<path d="M524.10 405.50 L526.70 400.28 L531.90 410.72 L537.10 400.28 L542.30 410.72 L544.90 405.50"/>
<path d="M612.10 405.50 L614.70 400.28 L619.90 410.72 L625.10 400.28 L630.30 410.72 L632.90 405.50"/>
<path d="M254.50 461.98 L270.50 452.50"/>
<path d="M254.50 475.02 L270.50 483.50"/>
<path d="M262.55 482.85 L263.85 477.63 L270.50 483.50 Z"/>
<path d="M453.50 455.98 L468.50 447.50"/>
<path d="M453.50 469.02 L468.50 478.50"/>
<path d="M461.55 476.85 L462.85 471.63 L468.50 478.50 Z"/>
<path d="M714.50 476.98 L729.50 468.50"/>
<path d="M714.50 490.02 L729.50 499.50"/>
<path d="M722.55 497.85 L723.85 492.63 L729.50 499.50 Z"/>
<path d="M301.50 523.10 L306.72 525.70 L296.28 530.90 L306.72 536.10 L296.28 541.30 L301.50 543.90"/>
<path d="M313.70 533.60 L309.30 536.50 L313.70 539.40"/>
<path d="M338.50 580.80 L343.72 578.10 L333.28 572.70 L343.72 567.30 L333.28 561.90 L338.50 559.20"/>
<path d="M350.70 564.60 L346.30 567.50 L350.70 570.40"/>
<path d="M560.10 405.50 L562.70 410.72 L567.90 400.28 L573.10 410.72 L578.30 400.28 L580.90 405.50"/>
<path d="M570.60 417.30 L573.50 413.70 L576.40 417.30"/>
<path d="M560.10 567.50 L562.70 562.28 L567.90 572.72 L573.10 562.28 L578.30 572.72 L580.90 567.50"/>
<path d="M570.60 556.40 L573.50 560.00 L576.40 556.40"/>
</g>
<g fill="#0000ff" shape-rendering="crispEdges">
<rect x="269.0" y="357.0" width="3" height="3"/>
<rect x="410.0" y="357.0" width="3" height="3"/>
<rect x="441.0" y="357.0" width="3" height="3"/>
<rect x="467.0" y="357.0" width="3" height="3"/>
<rect x="692.0" y="357.0" width="3" height="3"/>
<rect x="728.0" y="357.0" width="3" height="3"/>
<rect x="212.0" y="467.0" width="3" height="3"/>
<rect x="243.0" y="467.0" width="3" height="3"/>
<rect x="269.0" y="451.0" width="3" height="3"/>
<rect x="269.0" y="519.0" width="3" height="3"/>
<rect x="212.0" y="608.0" width="3" height="3"/>
<rect x="269.0" y="608.0" width="3" height="3"/>
<rect x="300.0" y="608.0" width="3" height="3"/>
<rect x="337.0" y="608.0" width="3" height="3"/>
<rect x="410.0" y="608.0" width="3" height="3"/>
<rect x="467.0" y="608.0" width="3" height="3"/>
<rect x="692.0" y="608.0" width="3" height="3"/>
<rect x="728.0" y="608.0" width="3" height="3"/>
<rect x="760.0" y="608.0" width="3" height="3"/>
<rect x="807.0" y="608.0" width="3" height="3"/>
<rect x="410.0" y="461.0" width="3" height="3"/>
<rect x="441.0" y="461.0" width="3" height="3"/>
<rect x="467.0" y="493.0" width="3" height="3"/>
<rect x="509.0" y="493.0" width="3" height="3"/>
<rect x="546.0" y="404.0" width="3" height="3"/>
<rect x="598.0" y="404.0" width="3" height="3"/>
<rect x="572.0" y="440.0" width="3" height="3"/>
<rect x="572.0" y="482.0" width="3" height="3"/>
<rect x="634.0" y="425.0" width="3" height="3"/>
<rect x="728.0" y="425.0" width="3" height="3"/>
<rect x="692.0" y="456.0" width="3" height="3"/>
<rect x="728.0" y="456.0" width="3" height="3"/>
<rect x="692.0" y="482.0" width="3" height="3"/>
<rect x="728.0" y="524.0" width="3" height="3"/>
</g>
<g font-weight="bold" font-size="7">
<text x="276.2" y="404.7" fill="#000" font-size="7">R19</text>
<text x="276.2" y="416.7" fill="#000" font-size="7">12k</text>
<text x="219.2" y="425.7" fill="#000" font-size="7">R17</text>
<text x="219.2" y="437.7" fill="#000" font-size="7">1200k</text>
<text x="219.2" y="514.7" fill="#000" font-size="7">R18</text>
<text x="219.2" y="526.7" fill="#000" font-size="7">330k</text>
<text x="276.2" y="546.7" fill="#000" font-size="7">R15</text>
<text x="276.2" y="558.7" fill="#000" font-size="7">4k7</text>
<text x="417.2" y="399.7" fill="#000" font-size="7">R2</text>
<text x="417.2" y="411.7" fill="#000" font-size="7">470k</text>
<text x="417.2" y="514.7" fill="#000" font-size="7">R1</text>
<text x="417.2" y="526.7" fill="#000" font-size="7">1000k</text>
<text x="474.2" y="514.7" fill="#000" font-size="7">R3</text>
<text x="474.2" y="526.7" fill="#000" font-size="7">3k3</text>
<text x="516.2" y="535.7" fill="#000" font-size="7">R5</text>
<text x="516.2" y="547.7" fill="#000" font-size="7">1k8</text>
<text x="579.2" y="462.7" fill="#000" font-size="7">R9</text>
<text x="579.2" y="474.7" fill="#000" font-size="7">22k</text>
<text x="579.2" y="519.7" fill="#000" font-size="7">R10</text>
<text x="579.2" y="531.7" fill="#000" font-size="7">1k</text>
<text x="699.2" y="389.7" fill="#000" font-size="7">R12</text>
<text x="699.2" y="401.7" fill="#000" font-size="7">2200k</text>
<text x="735.2" y="389.7" fill="#000" font-size="7">R11</text>
<text x="735.2" y="401.7" fill="#000" font-size="7">8k2</text>
<text x="641.2" y="530.7" fill="#000" font-size="7">R6</text>
<text x="641.2" y="542.7" fill="#000" font-size="7">1k8</text>
<text x="699.2" y="546.7" fill="#000" font-size="7">R13</text>
<text x="699.2" y="558.7" fill="#000" font-size="7">220k</text>
<text x="735.2" y="546.7" fill="#000" font-size="7">R14</text>
<text x="735.2" y="558.7" fill="#000" font-size="7">1k</text>
<text x="814.2" y="540.7" fill="#000" font-size="7">Rload</text>
<text x="814.2" y="552.7" fill="#000" font-size="7">50k</text>
<text x="230.7" y="459.9" fill="#000" font-size="7" text-anchor="middle">R16</text>
<text x="230.7" y="480.0" fill="#000" font-size="7" text-anchor="middle">1k</text>
<text x="428.7" y="454.6" fill="#000" font-size="7" text-anchor="middle">R4</text>
<text x="428.7" y="474.0" fill="#000" font-size="7" text-anchor="middle">1k</text>
<text x="533.7" y="397.6" fill="#000" font-size="7" text-anchor="middle">R8</text>
<text x="533.7" y="417.0" fill="#000" font-size="7" text-anchor="middle">4k7</text>
<text x="621.7" y="397.6" fill="#000" font-size="7" text-anchor="middle">R7</text>
<text x="621.7" y="417.0" fill="#000" font-size="7" text-anchor="middle">4k7</text>
<text x="303.8" y="487.8" fill="#000" font-size="7">C14</text>
<text x="303.8" y="503.8" fill="#000" font-size="7">1µ</text>
<text x="246.8" y="493.3" fill="#000" font-size="7">C13</text>
<text x="246.8" y="509.3" fill="#000" font-size="7">100p</text>
<text x="444.8" y="399.3" fill="#000" font-size="7">C2</text>
<text x="444.8" y="415.3" fill="#000" font-size="7">47p</text>
<text x="541.2" y="429.1" fill="#000" font-size="7" text-anchor="end">C5</text>
<text x="545.2" y="440.1" fill="#000" font-size="7" text-anchor="end">100n</text>
<text x="601.8" y="425.3" fill="#000" font-size="7">C4</text>
<text x="601.8" y="441.3" fill="#000" font-size="7">100n</text>
<text x="763.8" y="545.3" fill="#000" font-size="7">C9</text>
<text x="763.8" y="561.3" fill="#000" font-size="7">47µ</text>
<text x="191.0" y="459.9" fill="#000" font-size="7" text-anchor="middle">C15</text>
<text x="191.4" y="480.0" fill="#000" font-size="7" text-anchor="middle">220n</text>
<text x="379.0" y="454.6" fill="#000" font-size="7" text-anchor="middle">C1</text>
<text x="379.4" y="474.0" fill="#000" font-size="7" text-anchor="middle">470n</text>
<text x="494.0" y="486.6" fill="#000" font-size="7" text-anchor="middle">C3</text>
<text x="494.4" y="506.0" fill="#000" font-size="7" text-anchor="middle">10µ</text>
<text x="708.0" y="449.6" fill="#000" font-size="7" text-anchor="middle">C8</text>
<text x="708.4" y="469.0" fill="#000" font-size="7" text-anchor="middle">47p</text>
<text x="765.5" y="449.6" fill="#000" font-size="7" text-anchor="middle">C10</text>
<text x="765.9" y="469.0" fill="#000" font-size="7" text-anchor="middle">1µ</text>
<text x="666.0" y="475.6" fill="#000" font-size="7" text-anchor="middle">C11</text>
<text x="666.4" y="495.0" fill="#000" font-size="7" text-anchor="middle">220n</text>
<text x="530.5" y="559.6" fill="#000" font-size="7" text-anchor="middle">C6</text>
<text x="530.9" y="579.0" fill="#000" font-size="7" text-anchor="middle">3n9</text>
<text x="609.0" y="559.6" fill="#000" font-size="7" text-anchor="middle">C7</text>
<text x="609.4" y="579.0" fill="#000" font-size="7" text-anchor="middle">3n9</text>
<text x="266.9" y="464.7" fill="#000" font-size="7">Q3</text>
<text x="266.9" y="476.7" fill="#000" font-size="7">BC547C</text>
<text x="465.9" y="459.6" fill="#000" font-size="7">Q1</text>
<text x="465.9" y="471.6" fill="#000" font-size="7">BC547C</text>
<text x="726.9" y="480.6" fill="#000" font-size="7">Q2</text>
<text x="726.9" y="492.6" fill="#000" font-size="7">BC547C</text>
<text x="307.0" y="546.6" fill="#000" font-size="7">U4</text>
<text x="344.0" y="560.6" fill="#000" font-size="7">U3</text>
<text x="582.3" y="421.3" fill="#000" font-size="7" transform="rotate(-90 582.3 421.3)">U1</text>
<text x="566.3" y="557.5" fill="#000" font-size="7" transform="rotate(-90 566.3 557.5)">U2</text>
<circle cx="155.50" cy="532.80" r="10.00" fill="none" stroke="#000080" stroke-width="1.15"/>
<path d="M147.50 532.80 C149.70 526.08 153.30 526.08 155.50 532.80 S161.30 539.52 163.50 532.80" fill="none" stroke="#000080" stroke-width="1.15"/>
<text x="163.4" y="522.6" fill="#000" font-size="7">V1</text>
<circle cx="970.50" cy="501.80" r="10.00" fill="none" stroke="#000080" stroke-width="1.15"/>
<text x="977.0" y="492.0" fill="#000" font-size="7">V2</text>
<text x="970.2" y="504.6" fill="#000" font-size="6.5" text-anchor="middle">30</text>
<text x="157.0" y="465.6" fill="#000" font-size="7">In</text>
<text x="803.4" y="454.4" fill="#000" font-size="7">out</text>
<text x="157.0" y="570.6" fill="#000" font-size="7">SINE(0 0.5 1k)</text>
<text x="156.0" y="580.0" fill="#000" font-size="7">AC 1</text>
<text x="259.2" y="623.2" fill="#000" font-size="7">Rtot=25K wiper=1</text>
<text x="633.0" y="311.1" fill="#000" font-size="7">.include potentiometer.sub</text>
<text x="633.0" y="318.9" fill="#000" font-size="7">.step param w 0 1 0.25</text>
<text x="717.4" y="318.9" fill="#0000e0" font-size="7">Step the wiper from 0 to 1(=100%)</text>
<text x="651.4" y="339.6" fill="#000" font-size="7">.ac oct 2 5 100k</text>
<text x="727.4" y="339.6" fill="#000" font-size="7">;tran 0 90m 80m uic</text>
<text x="816.6" y="339.6" fill="#000" font-size="7">;noise out in oct 1 10 100k</text>
<text x="560.6" y="392.4" fill="#0000e0" font-size="7">25k bas</text>
<text x="560.6" y="583.0" fill="#0000e0" font-size="7">25k tre</text>
<text x="607.4" y="627.2" fill="#0000e0" font-size="7">unitra r8010 uprava</text>
<text x="575.0" y="382.0" fill="#000" font-size="7.8" transform="rotate(-90 575.0 382.0)">Rtot=25 K wiper=w</text>
<text x="575.4" y="658.0" fill="#000" font-size="7.8" transform="rotate(-90 575.4 658.0)">Rtot=25 K wiper=w</text>
</g>
</svg>
</body></html>
